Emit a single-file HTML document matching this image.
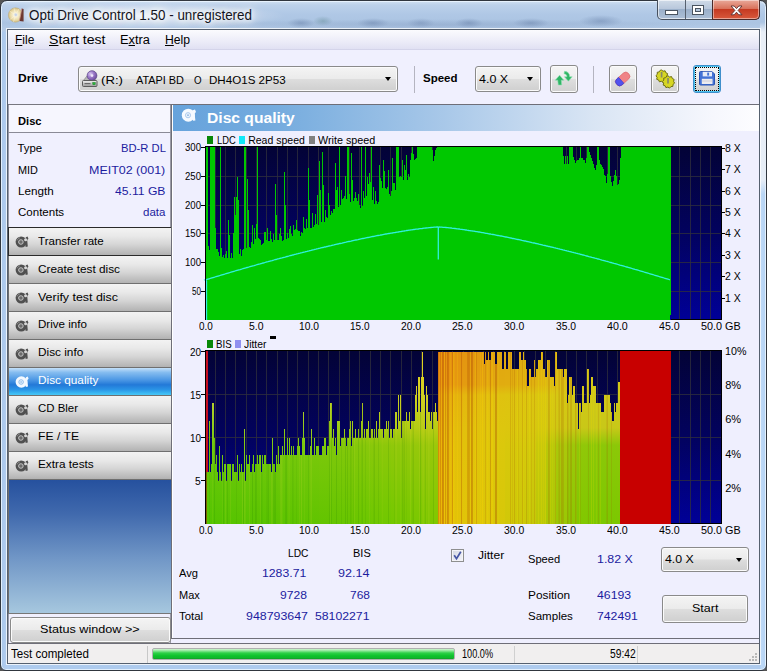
<!DOCTYPE html>
<html><head><meta charset="utf-8"><title>Opti Drive Control 1.50 - unregistered</title>
<style>
html,body{margin:0;padding:0}
body{width:767px;height:671px;overflow:hidden;position:relative;font-family:"Liberation Sans",sans-serif;font-size:12px;color:#000;background:#555}
div,span{position:absolute;box-sizing:border-box;white-space:nowrap}
#frame{left:0;top:0;width:767px;height:671px;border-radius:7px 7px 6px 6px;border:1px solid #30363e;box-shadow:inset 0 0 0 1px rgba(235,246,255,.85);background:
radial-gradient(ellipse 150px 13px at 135px 15px,rgba(255,255,255,.8),rgba(255,255,255,0) 100%),
radial-gradient(ellipse 14px 5px at 300px 22px,rgba(105,130,170,.5),rgba(105,130,170,0) 100%),
radial-gradient(ellipse 10px 5px at 322px 20px,rgba(100,140,150,.45),rgba(105,130,170,0) 100%),
radial-gradient(ellipse 16px 5px at 372px 22px,rgba(105,130,170,.5),rgba(105,130,170,0) 100%),
radial-gradient(ellipse 14px 5px at 420px 22px,rgba(105,130,170,.4),rgba(105,130,170,0) 100%),
radial-gradient(ellipse 14px 5px at 468px 22px,rgba(105,130,170,.5),rgba(105,130,170,0) 100%),
radial-gradient(ellipse 18px 5px at 530px 22px,rgba(105,130,170,.5),rgba(105,130,170,0) 100%),
radial-gradient(ellipse 22px 6px at 600px 20px,rgba(105,130,170,.5),rgba(105,130,170,0) 100%),
radial-gradient(ellipse 260px 6px at 440px 24px,rgba(120,145,185,.35),rgba(120,145,185,0) 100%),
linear-gradient(180deg,#d0e0f2 0,#bcd1ea 4px,#b0c8e6 13px,#abc4e2 22px,#b6cce7 30px,rgba(182,204,231,0) 31px),
linear-gradient(90deg,#a9c6ea 0,#b4cff0 7px,rgba(180,207,240,0) 8px,rgba(190,214,240,0) 759px,#bcd8f6 760px,#b4d2f4 767px),
linear-gradient(180deg,#c8daee 0,#b8d0ec 220px,#aecbee 100%)}
#title{left:29px;top:6px;font-size:14.5px;line-height:17px;color:#000;text-shadow:0 0 6px #fff,0 0 10px #fff,0 0 14px #fff}
#client{left:7px;top:29px;width:753px;height:635px;background:#efeffe;border:1px solid #55606f;box-shadow:0 0 0 1px rgba(255,255,255,.75)}
#menubar{left:8px;top:30px;width:751px;height:20px;background:linear-gradient(#fbfbfe 0,#ececf8 60%,#e1e1f3 100%);border-bottom:1px solid #d4d4ea}
.mi{top:33px;font-size:13.5px;line-height:15px}
u{text-decoration:underline;text-underline-offset:1px}
#tb{left:8px;top:50px;width:751px;height:55px;background:#f0f0fe;border-bottom:1px solid #77777f}
.b{font-weight:bold}
.combo{border:1px solid #8a8a8a;border-radius:3px;background:linear-gradient(#f4f4f4 0,#ebebeb 48%,#dddddd 52%,#cfcfcf 100%);box-shadow:inset 0 0 0 1px #fbfbfb}
.arrow{width:0;height:0;border-left:3.5px solid transparent;border-right:3.5px solid transparent;border-top:4px solid #000}
.tbtn{width:28px;height:28px;border:1px solid #8a8a8a;border-radius:3px;background:linear-gradient(#f5f5f5 0,#ececec 48%,#dedede 52%,#d0d0d0 100%);box-shadow:inset 0 0 0 1px #fbfbfb}
.sep{width:1px;background:#b4b4c0}
/* left panel */
#lp{left:8px;top:105px;width:163px;height:539px;background:#f0f0fe;border-left:1px solid #9a9aa6;border-right:1px solid #9a9aa6}
.lab{font-size:11.5px;line-height:14px;color:#000}
.val{font-size:11.5px;line-height:14px;color:#1a1aa6;text-align:right}
.nbtn{left:8px;width:164px;height:29px;border:1px solid #6f6f6f;background:linear-gradient(#f3f3f3 0,#e9e9e9 30%,#d6d6d6 60%,#b2b2b2 100%)}
.nbtn span{left:29px;top:6px;font-size:12px;line-height:14px;letter-spacing:.2px}
.nbtn.sel{background:linear-gradient(#c4e0f9 0,#86bdf0 16%,#4a96e4 45%,#2379d8 62%,#2a94e6 80%,#3ab8f2 93%,#48c6f6 100%)}
.nbtn.sel span{color:#fff}
.ico{left:8px;top:6px;width:15px;height:15px}
#blue{left:8px;top:480px;width:164px;height:134px;border-left:1px solid #6f6f6f;border-right:1px solid #6f6f6f;background:linear-gradient(#26519e 0,#4069ad 25%,#7096c6 58%,#a7c8df 100%)}
/* right */
#rp{left:171px;top:104px;width:588px;height:535px;background:#efeffe;border:1px solid #6e6e78;border-right:none;box-shadow:inset 1px 0 0 #fff}
#hdr{left:173px;top:105px;width:586px;height:26px;background:linear-gradient(90deg,#67a3dc 0,#74abde 100px,#a5c6e8 260px,#d9e5f4 420px,#f6f7fd 540px,#fdfdff 586px)}
#hdr span{left:34px;top:5px;font-size:15px;line-height:17px;color:#fff;letter-spacing:.2px}
.ax{font-size:11px;line-height:12px;color:#000}
.axr{text-align:right}
svg{position:absolute;left:0;top:0}
</style></head><body>
<div id="frame"></div>
<!-- title icon -->
<svg width="767" height="30" viewBox="0 0 767 30">
 <defs><radialGradient id="cd" cx="50%" cy="50%" r="50%"><stop offset="0" stop-color="#fff"/><stop offset=".3" stop-color="#f8f0d4"/><stop offset=".7" stop-color="#eadba8"/><stop offset="1" stop-color="#d2bd80"/></radialGradient></defs>
 <circle cx="15.500" cy="15" r="7.200" fill="url(#cd)" stroke="#b8a878" stroke-width=".5"/>
 <g stroke="#fff8e0" stroke-width=".7" opacity=".7"><path d="M15.500 15L9.500 11M15.500 15L10 19.500M15.500 15L14 8M15.500 15L13.500 22M15.500 15L19 9"/></g>
 <circle cx="15.800" cy="14.800" r="1.700" fill="#c9d3e6" stroke="#f4f0e0" stroke-width=".6"/>
 <path d="M21.800 8.500l1.800 .5v12.500l-4.200 -.6 .6 -3z" fill="#5a1c14" opacity=".9"/><path d="M21.800 8.500l-1.800 9.500 -.6 3" stroke="#c89088" stroke-width=".8" fill="none"/>
</svg>
<div style="left:29.00px;top:8.15px;font-size:14.00px;line-height:14.00px;transform:scaleX(0.9584);transform-origin:0 0;color:#14141c;text-shadow:0 0 5px #fff,0 0 9px #fff,0 0 13px #fff,0 0 17px #fff;">Opti Drive Control 1.50 - unregistered</div>

<!-- caption buttons -->
<div style="left:657px;top:0;width:103px;height:20px;border:1px solid #46505e;border-top:none;border-radius:0 0 5px 5px;background:linear-gradient(#d0dbe8 0,#b9c8dc 45%,#9bb0ca 50%,#adc0d7 100%);box-shadow:inset 0 0 0 1px rgba(255,255,255,.6)"></div>
<div style="left:712px;top:0;width:48px;height:20px;border:1px solid #4a2a2a;border-top:none;border-radius:0 0 5px 0;background:linear-gradient(#e9a99a 0,#d9725c 45%,#c53a22 50%,#d8593c 100%);box-shadow:inset 0 0 0 1px rgba(255,255,255,.45)"></div>
<div style="left:685px;top:0;width:1px;height:19px;background:#56606e"></div>
<svg width="767" height="30" viewBox="0 0 767 30">
 <rect x="665.5" y="10.5" width="12" height="4" fill="#fff" stroke="#4a5460" stroke-width="1"/>
 <rect x="692.5" y="5.5" width="11" height="9" fill="#fff" stroke="#4a5460"/><rect x="695.5" y="8.5" width="5" height="3" fill="#b5c7dc" stroke="#4a5460"/>
 <path d="M731 6l3.2 0 2.3 2.6 2.3-2.6 3.2 0-3.9 4.4 3.9 4.4-3.2 0-2.3-2.6-2.3 2.6-3.2 0 3.9-4.4z" fill="#fff" stroke="#5a3030" stroke-width=".9"/>
</svg>
<div style="left:760px;top:22px;width:6px;height:172px;background:linear-gradient(rgba(236,241,248,0) 0,#e9eff7 10px,#e6edf6 158px,rgba(230,237,246,0) 172px)"></div>
<div id="client"></div>
<div id="menubar"></div>
<div id="tb"></div>
<div style="left:15.20px;top:33.92px;font-size:12.50px;line-height:12.50px;transform:scaleX(0.9590);transform-origin:0 0;"><u>F</u>ile</div>
<div style="left:49.20px;top:33.92px;font-size:12.50px;line-height:12.50px;transform:scaleX(1.1300);transform-origin:0 0;"><u>S</u>tart test</div>
<div style="left:120.00px;top:33.92px;font-size:12.50px;line-height:12.50px;transform:scaleX(1.0256);transform-origin:0 0;">E<u>x</u>tra</div>
<div style="left:165.00px;top:33.92px;font-size:12.50px;line-height:12.50px;transform:scaleX(0.9732);transform-origin:0 0;"><u>H</u>elp</div>
<div style="left:17.50px;top:72.91px;font-size:11.80px;line-height:11.80px;transform:scaleX(1.0169);transform-origin:0 0;font-weight:bold;">Drive</div>
<div style="left:423.40px;top:72.71px;font-size:11.80px;line-height:11.80px;transform:scaleX(0.9746);transform-origin:0 0;font-weight:bold;">Speed</div>

<div class="combo" style="left:78px;top:66px;width:320px;height:26px"></div>
<div class="arrow" style="left:385px;top:77px"></div>
<div class="sep" style="left:414px;top:66px;height:27px"></div>
<div class="combo" style="left:475px;top:66px;width:66px;height:26px"></div>
<div class="arrow" style="left:527px;top:77px"></div>
<div class="tbtn" style="left:550px;top:65px"></div>
<div class="sep" style="left:593px;top:66px;height:27px"></div>
<div class="tbtn" style="left:609px;top:65px"></div>
<div class="tbtn" style="left:651px;top:65px"></div>
<div class="tbtn" style="left:693px;top:65px;border-color:#3f8fcb;box-shadow:inset 0 0 0 1px #4cc4f0"></div>
<div style="left:695px;top:67px;width:24px;height:24px;border:1px dotted #000"></div>
<svg width="767" height="110" viewBox="0 0 767 110">
 <defs><linearGradient id="drv" x1="0" y1="0" x2="0" y2="1"><stop offset="0" stop-color="#f2f2f2"/><stop offset="1" stop-color="#9a9a9a"/></linearGradient>
 <radialGradient id="pd" cx="35%" cy="35%" r="70%"><stop offset="0" stop-color="#d8c8f0"/><stop offset=".5" stop-color="#9a78c8"/><stop offset="1" stop-color="#6a4a9a"/></radialGradient></defs>
 <!-- drive icon -->
 <path d="M83 81l4-5h6l3 5z" fill="#b8b8b8" stroke="#777" stroke-width=".6"/>
 <circle cx="92" cy="75.600" r="4.900" fill="url(#pd)" stroke="#5a4488" stroke-width=".7"/><circle cx="92" cy="75.600" r="1.300" fill="#efe8fa"/>
 <rect x="82.500" y="80.500" width="14.500" height="6" rx="1" fill="url(#drv)" stroke="#5c5c5c"/>
 <rect x="84.500" y="83" width="6" height="1.200" fill="#6a6a6a"/>
 <rect x="92.800" y="82.500" width="2.400" height="2.200" fill="#28b838" stroke="#157a20" stroke-width=".5"/>
 <!-- refresh -->
 <path d="M559.600 75.200l4.200 5h-2.500l.4 4.800h-3.400l-.6-4.800h-2.500z" fill="#2fb565" stroke="#8fe0b0" stroke-width=".6"/>
 <path d="M564.500 71.300q4 .4 4.800 3.200l.4 2.300h2.500l-3.800 4.400-4-4.400h2.500l-.3-1.600q-.5-1.200-2.600-1.500z" fill="#2fb565" stroke="#8fe0b0" stroke-width=".6"/>
 <!-- eraser -->
 <g transform="rotate(-42 622.700 79)"><rect x="614.700" y="75" width="16" height="8" rx="3.600" fill="#f08486" stroke="#d86468" stroke-width=".6"/><path d="M618.300 75h2.400v8h-2.400a3.600 3.600 0 0 1-3.600-3.600v-.8a3.600 3.600 0 0 1 3.600-3.600z" fill="#5252ee" stroke="#3838c8" stroke-width=".6"/></g>
 <!-- gears -->
 <g fill="#d6d622" stroke="#6e6e12" stroke-width="1"><path d="M661.500 70l1.600 1.200 2-.4.700 1.900 1.800.9-.5 2 1 1.700-1.600 1.300-.1 2-2 .2-1.300 1.500-1.700-1-2 .5-.8-1.800-1.900-.7.400-2-1.200-1.600 1.400-1.400-.1-2 2-.4 1.100-1.700z"/><path d="M668 75.800l1.600 1.200 2-.4.700 1.900 1.800.9-.5 2 1 1.700-1.600 1.300-.1 2-2 .2-1.300 1.500-1.700-1-2 .5-.8-1.800-1.900-.7.400-2-1.200-1.600 1.400-1.400-.1-2 2-.4 1.100-1.700z"/></g>
 <rect x="660.800" y="72" width="1.600" height="5.500" fill="#86866a"/><rect x="667.200" y="78" width="1.600" height="5.500" fill="#86866a"/>
 <!-- floppy -->
 <path d="M699.500 72.500q0-1 1-1h11.500l2.500 2.500v10q0 1-1 1h-13q-1 0-1-1z" fill="#4373d6" stroke="#2c56b4"/>
 <rect x="702.700" y="71.800" width="9.300" height="4.600" fill="#e6ecf8"/><rect x="707.200" y="72.600" width="1.900" height="3" fill="#4373d6"/>
 <rect x="701.800" y="78.800" width="10.700" height="5.200" fill="#ececf0"/><rect x="701.800" y="80.600" width="10.700" height=".8" fill="#c8c8d0"/>
</svg>

<!-- LEFT PANEL -->
<div id="lp"></div>
<div style="left:8px;top:105px;width:163px;height:28px;background:#f6f6fe;border:1px solid #9a9aa6;border-top:none;border-bottom:1px solid #8a8a96"></div>
<div class="nbtn" style="top:227px;border-color:#2a2a2a"></div>
<div class="nbtn" style="top:255px"></div>
<div class="nbtn" style="top:283px"></div>
<div class="nbtn" style="top:311px"></div>
<div class="nbtn" style="top:339px"></div>
<div class="nbtn sel" style="top:367px"></div>
<div class="nbtn" style="top:395px"></div>
<div class="nbtn" style="top:423px"></div>
<div class="nbtn" style="top:451px"></div>
<div style="left:8px;top:255px;width:164px;height:1px;background:#2a2a2a"></div>
<div id="blue"></div>
<div style="left:8px;top:613px;width:164px;height:1px;background:#777"></div>
<div style="left:10px;top:617px;width:161px;height:26px;border:1px solid #8a8a8a;border-radius:3px;background:linear-gradient(#f4f4f4 0,#ebebeb 48%,#dddddd 52%,#cfcfcf 100%);box-shadow:inset 0 0 0 1px #fbfbfb"></div>

<!-- nav icons -->
<svg width="180" height="480" viewBox="0 0 180 480">
 <defs><g id="dsc"><circle cx="0" cy="0" r="5.600" fill="#505050"/><circle cx="-.3" cy="0" r="2.300" fill="#6c6c6c" stroke="#cdcdcd" stroke-width=".9"/><path d="M-4.200 -1.500a4.500 4.500 0 0 1 3 -2.800" stroke="#8a8a8a" stroke-width="1" fill="none"/><path d="M4.600 -4.800l1.800 -.6 .8 2.200 -1.200 1.200 .6 6.600 -2.200 .4 -.4 -6z" fill="#505050"/><circle cx="4.400" cy="-2.200" r="1.500" fill="#d8d8d8"/></g>
 <g id="dscw"><circle cx="0" cy="0" r="5.800" fill="#f4f9ff"/><circle cx="-.3" cy="0" r="2.300" fill="#e4f0fc" stroke="#7fb2e6" stroke-width=".8"/><circle cx="-.3" cy="0" r=".8" fill="#7fb2e6"/><path d="M4.600 -4.800l1.800 -.6 .8 2.200 -1.200 1.200 .6 6.600 -2.200 .4 -.4 -6z" fill="#f4f9ff"/></g></defs>
 <use href="#dsc" x="21.200" y="242"/><use href="#dsc" x="21.200" y="270"/><use href="#dsc" x="21.200" y="298"/><use href="#dsc" x="21.200" y="326"/><use href="#dsc" x="21.200" y="354"/>
 <use href="#dscw" x="21.400" y="382"/><use href="#dsc" x="21.200" y="410"/><use href="#dsc" x="21.200" y="438"/><use href="#dsc" x="21.200" y="466"/>
</svg>

<!-- RIGHT PANEL -->
<div id="rp"></div>
<div id="hdr"></div>
<svg width="767" height="671" viewBox="0 0 767 671">
 <defs><linearGradient id="nv" x1="0" y1="0" x2="0" y2="1"><stop offset="0" stop-color="#030336"/><stop offset=".5" stop-color="#02025e"/><stop offset="1" stop-color="#000098"/></linearGradient>
 <use href="#dscw" id="x"/></defs>
 <g transform="translate(188.300,115.200)"><circle r="6.500" fill="#f6faff"/><circle cx="-.3" r="2.600" fill="#e9f2fc" stroke="#9fc2e8" stroke-width=".8"/><circle cx="-.3" r=".9" fill="#8fb6e2"/><path d="M4.500 -5l2.200 -.6 1 2.400 -1.400 1.400 .8 7 -2.400 .4 -.6 -6.400z" fill="#f6faff"/></g>
 <!-- chart 1 -->
 <rect x="205" y="146" width="517" height="174" fill="url(#nv)"/>
 <g stroke="#2e2e3c" stroke-opacity=".8" stroke-width="1" shape-rendering="crispEdges"><path d="M215.5 146V320"/><path d="M225.5 146V320"/><path d="M235.5 146V320"/><path d="M246.5 146V320"/><path d="M256.5 146V320"/><path d="M266.5 146V320"/><path d="M277.5 146V320"/><path d="M287.5 146V320"/><path d="M297.5 146V320"/><path d="M308.5 146V320"/><path d="M318.5 146V320"/><path d="M328.5 146V320"/><path d="M339.5 146V320"/><path d="M349.5 146V320"/><path d="M359.5 146V320"/><path d="M370.5 146V320"/><path d="M380.5 146V320"/><path d="M390.5 146V320"/><path d="M401.5 146V320"/><path d="M411.5 146V320"/><path d="M421.5 146V320"/><path d="M432.5 146V320"/><path d="M442.5 146V320"/><path d="M452.5 146V320"/><path d="M463.5 146V320"/><path d="M473.5 146V320"/><path d="M483.5 146V320"/><path d="M493.5 146V320"/><path d="M504.5 146V320"/><path d="M514.5 146V320"/><path d="M524.5 146V320"/><path d="M535.5 146V320"/><path d="M545.5 146V320"/><path d="M555.5 146V320"/><path d="M566.5 146V320"/><path d="M576.5 146V320"/><path d="M586.5 146V320"/><path d="M597.5 146V320"/><path d="M607.5 146V320"/><path d="M617.5 146V320"/><path d="M628.5 146V320"/><path d="M638.5 146V320"/><path d="M648.5 146V320"/><path d="M659.5 146V320"/><path d="M669.5 146V320"/><path d="M679.5 146V320"/><path d="M690.5 146V320"/><path d="M700.5 146V320"/><path d="M710.5 146V320"/><path d="M205 176.5H721"/><path d="M205 205.5H721"/><path d="M205 233.5H721"/><path d="M205 262.5H721"/><path d="M205 291.5H721"/></g>
 <path d="M205 320 L206 147.0 L207 147.0 L207 147.0 L208 147.0 L208 245.7 L209 245.7 L209 250.0 L210 250.0 L210 147.0 L211 147.0 L211 147.0 L212 147.0 L212 147.0 L213 147.0 L213 147.0 L214 147.0 L214 147.0 L215 147.0 L215 228.0 L216 228.0 L216 249.4 L217 249.4 L217 249.3 L218 249.3 L218 252.1 L219 252.1 L219 256.2 L220 256.2 L220 147.0 L221 147.0 L221 247.6 L222 247.6 L222 256.6 L223 256.6 L223 254.9 L224 254.9 L224 257.8 L225 257.8 L225 253.9 L226 253.9 L226 251.1 L227 251.1 L227 257.8 L228 257.8 L228 220.0 L229 220.0 L229 235.0 L230 235.0 L230 258.2 L231 258.2 L231 252.6 L232 252.6 L232 258.4 L233 258.4 L233 233.0 L234 233.0 L234 197.0 L235 197.0 L235 215.0 L236 215.0 L236 197.0 L237 197.0 L237 177.0 L238 177.0 L238 200.0 L239 200.0 L239 254.0 L240 254.0 L240 249.4 L241 249.4 L241 256.3 L242 256.3 L242 250.0 L243 250.0 L243 249.2 L244 249.2 L244 147.0 L245 147.0 L245 147.0 L246 147.0 L246 247.6 L247 247.6 L247 179.0 L248 179.0 L248 210.0 L249 210.0 L249 246.9 L250 246.9 L250 247.7 L251 247.7 L251 242.2 L252 242.2 L252 225.2 L253 225.2 L253 243.7 L254 243.7 L254 228.0 L255 228.0 L255 238.7 L256 238.7 L256 223.9 L257 223.9 L257 147.0 L258 147.0 L258 237.5 L259 237.5 L259 239.2 L260 239.2 L260 240.4 L261 240.4 L261 244.6 L262 244.6 L262 244.1 L263 244.1 L263 243.1 L264 243.1 L264 232.2 L265 232.2 L265 232.4 L266 232.4 L266 240.4 L267 240.4 L267 228.0 L268 228.0 L268 240.7 L269 240.7 L269 240.6 L270 240.6 L270 231.0 L271 231.0 L271 238.9 L272 238.9 L272 241.7 L273 241.7 L273 234.3 L274 234.3 L274 239.9 L275 239.9 L275 184.0 L276 184.0 L276 215.0 L277 215.0 L277 239.6 L278 239.6 L278 240.1 L279 240.1 L279 233.6 L280 233.6 L280 228.0 L281 228.0 L281 235.5 L282 235.5 L282 240.6 L283 240.6 L283 239.7 L284 239.7 L284 172.0 L285 172.0 L285 205.0 L286 205.0 L286 238.6 L287 238.6 L287 233.1 L288 233.1 L288 237.8 L289 237.8 L289 229.0 L290 229.0 L290 225.8 L291 225.8 L291 233.9 L292 233.9 L292 236.3 L293 236.3 L293 224.6 L294 224.6 L294 229.8 L295 229.8 L295 229.0 L296 229.0 L296 220.0 L297 220.0 L297 230.0 L298 230.0 L298 230.9 L299 230.9 L299 230.6 L300 230.6 L300 236.0 L301 236.0 L301 232.2 L302 232.2 L302 233.0 L303 233.0 L303 216.7 L304 216.7 L304 227.6 L305 227.6 L305 228.6 L306 228.6 L306 219.0 L307 219.0 L307 227.5 L308 227.5 L308 168.0 L309 168.0 L309 200.0 L310 200.0 L310 227.5 L311 227.5 L311 228.1 L312 228.1 L312 212.6 L313 212.6 L313 227.4 L314 227.4 L314 225.4 L315 225.4 L315 213.7 L316 213.7 L316 223.5 L317 223.5 L317 195.0 L318 195.0 L318 224.7 L319 224.7 L319 161.0 L320 161.0 L320 190.0 L321 190.0 L321 221.7 L322 221.7 L322 152.0 L323 152.0 L323 185.0 L324 185.0 L324 221.7 L325 221.7 L325 209.6 L326 209.6 L326 217.3 L327 217.3 L327 217.8 L328 217.8 L328 193.0 L329 193.0 L329 204.8 L330 204.8 L330 215.0 L331 215.0 L331 211.4 L332 211.4 L332 212.5 L333 212.5 L333 209.4 L334 209.4 L334 208.6 L335 208.6 L335 163.0 L336 163.0 L336 190.0 L337 190.0 L337 187.1 L338 187.1 L338 206.9 L339 206.9 L339 147.0 L340 147.0 L340 204.9 L341 204.9 L341 190.2 L342 190.2 L342 199.0 L343 199.0 L343 198.0 L344 198.0 L344 195.5 L345 195.5 L345 176.0 L346 176.0 L346 198.8 L347 198.8 L347 147.0 L348 147.0 L348 147.0 L349 147.0 L349 193.6 L350 193.6 L350 201.8 L351 201.8 L351 153.0 L352 153.0 L352 180.0 L353 180.0 L353 200.7 L354 200.7 L354 197.5 L355 197.5 L355 192.1 L356 192.1 L356 198.0 L357 198.0 L357 201.0 L358 201.0 L358 193.5 L359 193.5 L359 205.3 L360 205.3 L360 208.3 L361 208.3 L361 147.0 L362 147.0 L362 205.8 L363 205.8 L363 191.0 L364 191.0 L364 197.8 L365 197.8 L365 147.0 L366 147.0 L366 195.5 L367 195.5 L367 177.2 L368 177.2 L368 183.6 L369 183.6 L369 173.0 L370 173.0 L370 181.9 L371 181.9 L371 147.0 L372 147.0 L372 200.0 L373 200.0 L373 187.3 L374 187.3 L374 203.6 L375 203.6 L375 191.4 L376 191.4 L376 200.8 L377 200.8 L377 203.9 L378 203.9 L378 201.7 L379 201.7 L379 165.0 L380 165.0 L380 178.0 L381 178.0 L381 180.8 L382 180.8 L382 188.1 L383 188.1 L383 160.0 L384 160.0 L384 171.0 L385 171.0 L385 187.8 L386 187.8 L386 189.3 L387 189.3 L387 187.1 L388 187.1 L388 170.0 L389 170.0 L389 194.0 L390 194.0 L390 195.9 L391 195.9 L391 191.0 L392 191.0 L392 158.0 L393 158.0 L393 183.3 L394 183.3 L394 182.5 L395 182.5 L395 189.9 L396 189.9 L396 147.0 L397 147.0 L397 147.0 L398 147.0 L398 147.0 L399 147.0 L399 176.9 L400 176.9 L400 176.0 L401 176.0 L401 177.4 L402 177.4 L402 160.0 L403 160.0 L403 179.6 L404 179.6 L404 165.0 L405 165.0 L405 169.5 L406 169.5 L406 155.0 L407 155.0 L407 179.8 L408 179.8 L408 173.6 L409 173.6 L409 177.3 L410 177.3 L410 159.9 L411 159.9 L411 153.2 L412 153.2 L412 147.0 L413 147.0 L413 153.6 L414 153.6 L414 159.9 L415 159.9 L415 159.4 L416 159.4 L416 158.0 L417 158.0 L417 147.0 L418 147.0 L418 147.0 L419 147.0 L419 147.0 L420 147.0 L420 147.0 L421 147.0 L421 147.0 L422 147.0 L422 147.0 L423 147.0 L423 147.0 L424 147.0 L424 147.0 L425 147.0 L425 147.0 L426 147.0 L426 147.0 L427 147.0 L427 147.0 L428 147.0 L428 147.0 L429 147.0 L429 147.0 L430 147.0 L430 147.0 L431 147.0 L431 147.0 L432 147.0 L432 150.0 L433 150.0 L433 161.0 L434 161.0 L434 155.5 L435 155.5 L435 150.0 L436 150.0 L436 148.0 L437 148.0 L437 147.0 L438 147.0 L438 147.0 L439 147.0 L439 147.0 L440 147.0 L440 147.0 L441 147.0 L441 147.0 L442 147.0 L442 147.0 L443 147.0 L443 147.0 L444 147.0 L444 147.0 L445 147.0 L445 147.0 L446 147.0 L446 147.0 L447 147.0 L447 147.0 L448 147.0 L448 147.0 L449 147.0 L449 147.0 L450 147.0 L450 147.0 L451 147.0 L451 147.0 L452 147.0 L452 147.0 L453 147.0 L453 147.0 L454 147.0 L454 147.0 L455 147.0 L455 147.0 L456 147.0 L456 147.0 L457 147.0 L457 147.0 L458 147.0 L458 147.0 L459 147.0 L459 147.0 L460 147.0 L460 147.0 L461 147.0 L461 147.0 L462 147.0 L462 147.0 L463 147.0 L463 147.0 L464 147.0 L464 147.0 L465 147.0 L465 147.0 L466 147.0 L466 147.0 L467 147.0 L467 147.0 L468 147.0 L468 147.0 L469 147.0 L469 147.0 L470 147.0 L470 147.0 L471 147.0 L471 147.0 L472 147.0 L472 147.0 L473 147.0 L473 147.0 L474 147.0 L474 147.0 L475 147.0 L475 147.0 L476 147.0 L476 147.0 L477 147.0 L477 147.0 L478 147.0 L478 147.0 L479 147.0 L479 147.0 L480 147.0 L480 147.0 L481 147.0 L481 147.0 L482 147.0 L482 147.0 L483 147.0 L483 147.0 L484 147.0 L484 147.0 L485 147.0 L485 147.0 L486 147.0 L486 147.0 L487 147.0 L487 147.0 L488 147.0 L488 147.0 L489 147.0 L489 147.0 L490 147.0 L490 147.0 L491 147.0 L491 147.0 L492 147.0 L492 147.0 L493 147.0 L493 147.0 L494 147.0 L494 147.0 L495 147.0 L495 147.0 L496 147.0 L496 147.0 L497 147.0 L497 147.0 L498 147.0 L498 147.0 L499 147.0 L499 147.0 L500 147.0 L500 147.0 L501 147.0 L501 147.0 L502 147.0 L502 147.0 L503 147.0 L503 147.0 L504 147.0 L504 147.0 L505 147.0 L505 147.0 L506 147.0 L506 147.0 L507 147.0 L507 147.0 L508 147.0 L508 147.0 L509 147.0 L509 147.0 L510 147.0 L510 147.0 L511 147.0 L511 147.0 L512 147.0 L512 147.0 L513 147.0 L513 147.0 L514 147.0 L514 147.0 L515 147.0 L515 147.0 L516 147.0 L516 147.0 L517 147.0 L517 147.0 L518 147.0 L518 147.0 L519 147.0 L519 147.0 L520 147.0 L520 147.0 L521 147.0 L521 147.0 L522 147.0 L522 147.0 L523 147.0 L523 147.0 L524 147.0 L524 147.0 L525 147.0 L525 147.0 L526 147.0 L526 147.0 L527 147.0 L527 147.0 L528 147.0 L528 147.0 L529 147.0 L529 147.0 L530 147.0 L530 147.0 L531 147.0 L531 147.0 L532 147.0 L532 147.0 L533 147.0 L533 147.0 L534 147.0 L534 147.0 L535 147.0 L535 147.0 L536 147.0 L536 147.0 L537 147.0 L537 147.0 L538 147.0 L538 147.0 L539 147.0 L539 147.0 L540 147.0 L540 147.0 L541 147.0 L541 147.0 L542 147.0 L542 147.0 L543 147.0 L543 147.0 L544 147.0 L544 147.0 L545 147.0 L545 147.0 L546 147.0 L546 147.0 L547 147.0 L547 147.0 L548 147.0 L548 147.0 L549 147.0 L549 147.0 L550 147.0 L550 147.0 L551 147.0 L551 147.0 L552 147.0 L552 147.0 L553 147.0 L553 147.0 L554 147.0 L554 147.0 L555 147.0 L555 147.0 L556 147.0 L556 147.0 L557 147.0 L557 147.0 L558 147.0 L558 147.0 L559 147.0 L559 147.0 L560 147.0 L560 147.0 L561 147.0 L561 147.0 L562 147.0 L562 147.0 L563 147.0 L563 156.0 L564 156.0 L564 164.0 L565 164.0 L565 156.0 L566 156.0 L566 164.0 L567 164.0 L567 156.0 L568 156.0 L568 164.0 L569 164.0 L569 147.0 L570 147.0 L570 147.0 L571 147.0 L571 147.0 L572 147.0 L572 147.0 L573 147.0 L573 157.0 L574 157.0 L574 160.3 L575 160.3 L575 163.2 L576 163.2 L576 161.3 L577 161.3 L577 160.0 L578 160.0 L578 160.3 L579 160.3 L579 157.7 L580 157.7 L580 147.0 L581 147.0 L581 158.1 L582 158.1 L582 158.1 L583 158.1 L583 159.6 L584 159.6 L584 159.7 L585 159.7 L585 163.2 L586 163.2 L586 158.1 L587 158.1 L587 147.0 L588 147.0 L588 147.0 L589 147.0 L589 152.3 L590 152.3 L590 155.3 L591 155.3 L591 158.0 L592 158.0 L592 161.4 L593 161.4 L593 164.2 L594 164.2 L594 167.9 L595 167.9 L595 169.6 L596 169.6 L596 165.3 L597 165.3 L597 147.0 L598 147.0 L598 147.0 L599 147.0 L599 159.5 L600 159.5 L600 164.0 L601 164.0 L601 165.3 L602 165.3 L602 167.4 L603 167.4 L603 168.9 L604 168.9 L604 175.1 L605 175.1 L605 176.1 L606 176.1 L606 182.7 L607 182.7 L607 173.7 L608 173.7 L608 147.0 L609 147.0 L609 147.0 L610 147.0 L610 175.7 L611 175.7 L611 181.9 L612 181.9 L612 185.7 L613 185.7 L613 180.8 L614 180.8 L614 175.1 L615 175.1 L615 169.9 L616 169.9 L616 176.3 L617 176.3 L617 184.6 L618 184.6 L618 184.4 L619 184.4 L619 179.5 L620 179.5 L620 158.2 L621 158.2 L621 147.0 L622 147.0 L622 147.0 L623 147.0 L623 147.0 L624 147.0 L624 147.0 L625 147.0 L625 147.0 L626 147.0 L626 147.0 L627 147.0 L627 147.0 L628 147.0 L628 147.0 L629 147.0 L629 147.0 L630 147.0 L630 147.0 L631 147.0 L631 147.0 L632 147.0 L632 147.0 L633 147.0 L633 147.0 L634 147.0 L634 147.0 L635 147.0 L635 147.0 L636 147.0 L636 147.0 L637 147.0 L637 147.0 L638 147.0 L638 147.0 L639 147.0 L639 147.0 L640 147.0 L640 147.0 L641 147.0 L641 147.0 L642 147.0 L642 147.0 L643 147.0 L643 147.0 L644 147.0 L644 147.0 L645 147.0 L645 147.0 L646 147.0 L646 147.0 L647 147.0 L647 147.0 L648 147.0 L648 147.0 L649 147.0 L649 147.0 L650 147.0 L650 147.0 L651 147.0 L651 147.0 L652 147.0 L652 147.0 L653 147.0 L653 147.0 L654 147.0 L654 147.0 L655 147.0 L655 147.0 L656 147.0 L656 147.0 L657 147.0 L657 147.0 L658 147.0 L658 147.0 L659 147.0 L659 147.0 L660 147.0 L660 147.0 L661 147.0 L661 147.0 L662 147.0 L662 147.0 L663 147.0 L663 147.0 L664 147.0 L664 147.0 L665 147.0 L665 147.0 L666 147.0 L666 147.0 L667 147.0 L667 147.0 L668 147.0 L668 147.0 L669 147.0 L669 147.0 L670 147.0 L670 147.0 L671 147.0 L670.5 320 Z" fill="#00c800" shape-rendering="crispEdges"/>
 <path d="M206.5 320 L206.5 281 L205 280.0 L206 279.7 L207 279.4 L208 279.1 L209 278.8 L210 278.5 L211 278.2 L212 277.9 L213 277.6 L214 277.3 L215 277.0 L216 276.7 L217 276.4 L218 276.1 L219 275.8 L220 275.5 L221 275.2 L222 274.9 L223 274.6 L224 274.3 L225 274.0 L226 273.7 L227 273.4 L228 273.1 L229 272.8 L230 272.5 L231 272.2 L232 271.9 L233 271.6 L234 271.3 L235 271.0 L236 270.7 L237 270.4 L238 270.1 L239 269.8 L240 269.6 L241 269.3 L242 269.0 L243 268.7 L244 268.4 L245 268.1 L246 267.8 L247 267.5 L248 267.3 L249 267.0 L250 266.7 L251 266.4 L252 266.1 L253 265.8 L254 265.6 L255 265.3 L256 265.0 L257 264.7 L258 264.4 L259 264.1 L260 263.9 L261 263.6 L262 263.3 L263 263.0 L264 262.8 L265 262.5 L266 262.2 L267 261.9 L268 261.7 L269 261.4 L270 261.1 L271 260.8 L272 260.6 L273 260.3 L274 260.0 L275 259.7 L276 259.5 L277 259.2 L278 258.9 L279 258.7 L280 258.4 L281 258.1 L282 257.9 L283 257.6 L284 257.3 L285 257.1 L286 256.8 L287 256.5 L288 256.3 L289 256.0 L290 255.7 L291 255.5 L292 255.2 L293 255.0 L294 254.7 L295 254.4 L296 254.2 L297 253.9 L298 253.7 L299 253.4 L300 253.2 L301 252.9 L302 252.7 L303 252.4 L304 252.1 L305 251.9 L306 251.6 L307 251.4 L308 251.1 L309 250.9 L310 250.6 L311 250.4 L312 250.1 L313 249.9 L314 249.7 L315 249.4 L316 249.2 L317 248.9 L318 248.7 L319 248.4 L320 248.2 L321 247.9 L322 247.7 L323 247.5 L324 247.2 L325 247.0 L326 246.8 L327 246.5 L328 246.3 L329 246.0 L330 245.8 L331 245.6 L332 245.3 L333 245.1 L334 244.9 L335 244.6 L336 244.4 L337 244.2 L338 244.0 L339 243.7 L340 243.5 L341 243.3 L342 243.1 L343 242.8 L344 242.6 L345 242.4 L346 242.2 L347 241.9 L348 241.7 L349 241.5 L350 241.3 L351 241.1 L352 240.8 L353 240.6 L354 240.4 L355 240.2 L356 240.0 L357 239.8 L358 239.6 L359 239.3 L360 239.1 L361 238.9 L362 238.7 L363 238.5 L364 238.3 L365 238.1 L366 237.9 L367 237.7 L368 237.5 L369 237.3 L370 237.1 L371 236.9 L372 236.7 L373 236.5 L374 236.3 L375 236.1 L376 235.9 L377 235.7 L378 235.5 L379 235.3 L380 235.2 L381 235.0 L382 234.8 L383 234.6 L384 234.4 L385 234.2 L386 234.0 L387 233.9 L388 233.7 L389 233.5 L390 233.3 L391 233.1 L392 233.0 L393 232.8 L394 232.6 L395 232.5 L396 232.3 L397 232.1 L398 232.0 L399 231.8 L400 231.6 L401 231.5 L402 231.3 L403 231.1 L404 231.0 L405 230.8 L406 230.7 L407 230.5 L408 230.4 L409 230.2 L410 230.1 L411 229.9 L412 229.8 L413 229.6 L414 229.5 L415 229.4 L416 229.2 L417 229.1 L418 229.0 L419 228.8 L420 228.7 L421 228.6 L422 228.5 L423 228.3 L424 228.2 L425 228.1 L426 228.0 L427 227.9 L428 227.8 L429 227.7 L430 227.6 L431 227.5 L432 227.4 L433 227.3 L434 227.2 L435 227.2 L436 227.1 L437 227.0 L438 227.0 M438.3 227 L438.3 259.5 M438.3 227 L439 227.0 L440 227.1 L441 227.1 L442 227.2 L443 227.3 L444 227.4 L445 227.4 L446 227.5 L447 227.6 L448 227.7 L449 227.8 L450 227.9 L451 228.0 L452 228.2 L453 228.3 L454 228.4 L455 228.5 L456 228.6 L457 228.8 L458 228.9 L459 229.0 L460 229.2 L461 229.3 L462 229.4 L463 229.6 L464 229.7 L465 229.9 L466 230.0 L467 230.2 L468 230.3 L469 230.5 L470 230.6 L471 230.8 L472 230.9 L473 231.1 L474 231.2 L475 231.4 L476 231.6 L477 231.7 L478 231.9 L479 232.0 L480 232.2 L481 232.4 L482 232.6 L483 232.7 L484 232.9 L485 233.1 L486 233.3 L487 233.4 L488 233.6 L489 233.8 L490 234.0 L491 234.2 L492 234.3 L493 234.5 L494 234.7 L495 234.9 L496 235.1 L497 235.3 L498 235.5 L499 235.7 L500 235.9 L501 236.0 L502 236.2 L503 236.4 L504 236.6 L505 236.8 L506 237.0 L507 237.2 L508 237.4 L509 237.6 L510 237.8 L511 238.0 L512 238.3 L513 238.5 L514 238.7 L515 238.9 L516 239.1 L517 239.3 L518 239.5 L519 239.7 L520 239.9 L521 240.1 L522 240.4 L523 240.6 L524 240.8 L525 241.0 L526 241.2 L527 241.5 L528 241.7 L529 241.9 L530 242.1 L531 242.3 L532 242.6 L533 242.8 L534 243.0 L535 243.2 L536 243.5 L537 243.7 L538 243.9 L539 244.2 L540 244.4 L541 244.6 L542 244.8 L543 245.1 L544 245.3 L545 245.5 L546 245.8 L547 246.0 L548 246.3 L549 246.5 L550 246.7 L551 247.0 L552 247.2 L553 247.4 L554 247.7 L555 247.9 L556 248.2 L557 248.4 L558 248.7 L559 248.9 L560 249.2 L561 249.4 L562 249.6 L563 249.9 L564 250.1 L565 250.4 L566 250.6 L567 250.9 L568 251.1 L569 251.4 L570 251.6 L571 251.9 L572 252.2 L573 252.4 L574 252.7 L575 252.9 L576 253.2 L577 253.4 L578 253.7 L579 253.9 L580 254.2 L581 254.5 L582 254.7 L583 255.0 L584 255.2 L585 255.5 L586 255.8 L587 256.0 L588 256.3 L589 256.6 L590 256.8 L591 257.1 L592 257.4 L593 257.6 L594 257.9 L595 258.2 L596 258.4 L597 258.7 L598 259.0 L599 259.2 L600 259.5 L601 259.8 L602 260.1 L603 260.3 L604 260.6 L605 260.9 L606 261.2 L607 261.4 L608 261.7 L609 262.0 L610 262.3 L611 262.5 L612 262.8 L613 263.1 L614 263.4 L615 263.6 L616 263.9 L617 264.2 L618 264.5 L619 264.8 L620 265.1 L621 265.3 L622 265.6 L623 265.9 L624 266.2 L625 266.5 L626 266.8 L627 267.0 L628 267.3 L629 267.6 L630 267.9 L631 268.2 L632 268.5 L633 268.8 L634 269.1 L635 269.4 L636 269.6 L637 269.9 L638 270.2 L639 270.5 L640 270.8 L641 271.1 L642 271.4 L643 271.7 L644 272.0 L645 272.3 L646 272.6 L647 272.9 L648 273.2 L649 273.5 L650 273.8 L651 274.1 L652 274.4 L653 274.7 L654 275.0 L655 275.3 L656 275.6 L657 275.9 L658 276.2 L659 276.5 L660 276.8 L661 277.1 L662 277.4 L663 277.7 L664 278.0 L665 278.3 L666 278.6 L667 278.9 L668 279.2 L669 279.5 L670 279.8 " fill="none" stroke="#30f0e0" stroke-width="1.300"/>
 <path d="M205.500 320V146.500H721.500V320M671 319.500H722" fill="none" stroke="#000" shape-rendering="crispEdges"/>
 <!-- chart 2 -->
 <rect x="205" y="350" width="517" height="174" fill="url(#nv)"/>
 <g stroke="#2e2e3c" stroke-opacity=".8" stroke-width="1" shape-rendering="crispEdges"><path d="M215.5 350V524"/><path d="M225.5 350V524"/><path d="M235.5 350V524"/><path d="M246.5 350V524"/><path d="M256.5 350V524"/><path d="M266.5 350V524"/><path d="M277.5 350V524"/><path d="M287.5 350V524"/><path d="M297.5 350V524"/><path d="M308.5 350V524"/><path d="M318.5 350V524"/><path d="M328.5 350V524"/><path d="M339.5 350V524"/><path d="M349.5 350V524"/><path d="M359.5 350V524"/><path d="M370.5 350V524"/><path d="M380.5 350V524"/><path d="M390.5 350V524"/><path d="M401.5 350V524"/><path d="M411.5 350V524"/><path d="M421.5 350V524"/><path d="M432.5 350V524"/><path d="M442.5 350V524"/><path d="M452.5 350V524"/><path d="M463.5 350V524"/><path d="M473.5 350V524"/><path d="M483.5 350V524"/><path d="M493.5 350V524"/><path d="M504.5 350V524"/><path d="M514.5 350V524"/><path d="M524.5 350V524"/><path d="M535.5 350V524"/><path d="M545.5 350V524"/><path d="M555.5 350V524"/><path d="M566.5 350V524"/><path d="M576.5 350V524"/><path d="M586.5 350V524"/><path d="M597.5 350V524"/><path d="M607.5 350V524"/><path d="M617.5 350V524"/><path d="M628.5 350V524"/><path d="M638.5 350V524"/><path d="M648.5 350V524"/><path d="M659.5 350V524"/><path d="M669.5 350V524"/><path d="M679.5 350V524"/><path d="M690.5 350V524"/><path d="M700.5 350V524"/><path d="M710.5 350V524"/><path d="M205 394.5H721"/><path d="M205 437.5H721"/><path d="M205 480.5H721"/></g>
 <g shape-rendering="crispEdges"><defs><linearGradient id="z0" gradientUnits="userSpaceOnUse" x1="0" y1="350" x2="0" y2="523"><stop offset="0.00" stop-color="rgb(216,216,64)"/><stop offset="0.20" stop-color="rgb(200,212,55)"/><stop offset="0.26" stop-color="rgb(190,210,49)"/><stop offset="0.45" stop-color="rgb(140,204,24)"/><stop offset="0.55" stop-color="rgb(110,200,12)"/><stop offset="1.00" stop-color="rgb(84,196,0)"/></linearGradient><linearGradient id="z1" gradientUnits="userSpaceOnUse" x1="0" y1="350" x2="0" y2="523"><stop offset="0.00" stop-color="rgb(217,216,64)"/><stop offset="0.20" stop-color="rgb(200,212,55)"/><stop offset="0.26" stop-color="rgb(190,210,49)"/><stop offset="0.45" stop-color="rgb(141,204,24)"/><stop offset="0.55" stop-color="rgb(111,200,12)"/><stop offset="1.00" stop-color="rgb(85,196,0)"/></linearGradient><linearGradient id="z2" gradientUnits="userSpaceOnUse" x1="0" y1="350" x2="0" y2="523"><stop offset="0.00" stop-color="rgb(218,216,64)"/><stop offset="0.20" stop-color="rgb(201,212,54)"/><stop offset="0.26" stop-color="rgb(191,210,48)"/><stop offset="0.45" stop-color="rgb(142,204,24)"/><stop offset="0.55" stop-color="rgb(113,200,12)"/><stop offset="1.00" stop-color="rgb(87,196,0)"/></linearGradient><linearGradient id="z3" gradientUnits="userSpaceOnUse" x1="0" y1="350" x2="0" y2="523"><stop offset="0.00" stop-color="rgb(218,216,64)"/><stop offset="0.20" stop-color="rgb(202,212,54)"/><stop offset="0.26" stop-color="rgb(192,210,48)"/><stop offset="0.45" stop-color="rgb(143,204,24)"/><stop offset="0.55" stop-color="rgb(114,200,12)"/><stop offset="1.00" stop-color="rgb(88,196,0)"/></linearGradient><linearGradient id="z4" gradientUnits="userSpaceOnUse" x1="0" y1="350" x2="0" y2="523"><stop offset="0.00" stop-color="rgb(219,216,64)"/><stop offset="0.20" stop-color="rgb(202,212,54)"/><stop offset="0.26" stop-color="rgb(192,210,48)"/><stop offset="0.45" stop-color="rgb(144,204,24)"/><stop offset="0.55" stop-color="rgb(115,200,12)"/><stop offset="1.00" stop-color="rgb(89,196,0)"/></linearGradient><linearGradient id="z5" gradientUnits="userSpaceOnUse" x1="0" y1="350" x2="0" y2="523"><stop offset="0.00" stop-color="rgb(220,216,64)"/><stop offset="0.20" stop-color="rgb(203,212,53)"/><stop offset="0.26" stop-color="rgb(193,210,47)"/><stop offset="0.45" stop-color="rgb(145,204,24)"/><stop offset="0.55" stop-color="rgb(116,200,12)"/><stop offset="1.00" stop-color="rgb(90,196,0)"/></linearGradient><linearGradient id="z6" gradientUnits="userSpaceOnUse" x1="0" y1="350" x2="0" y2="523"><stop offset="0.00" stop-color="rgb(221,216,64)"/><stop offset="0.20" stop-color="rgb(203,212,53)"/><stop offset="0.26" stop-color="rgb(193,210,47)"/><stop offset="0.45" stop-color="rgb(146,204,24)"/><stop offset="0.55" stop-color="rgb(117,200,12)"/><stop offset="1.00" stop-color="rgb(91,196,0)"/></linearGradient><linearGradient id="z7" gradientUnits="userSpaceOnUse" x1="0" y1="350" x2="0" y2="523"><stop offset="0.00" stop-color="rgb(222,216,64)"/><stop offset="0.20" stop-color="rgb(204,212,52)"/><stop offset="0.26" stop-color="rgb(194,210,46)"/><stop offset="0.45" stop-color="rgb(147,204,24)"/><stop offset="0.55" stop-color="rgb(119,200,12)"/><stop offset="1.00" stop-color="rgb(93,196,0)"/></linearGradient><linearGradient id="z8" gradientUnits="userSpaceOnUse" x1="0" y1="350" x2="0" y2="523"><stop offset="0.00" stop-color="rgb(222,216,64)"/><stop offset="0.20" stop-color="rgb(205,212,52)"/><stop offset="0.26" stop-color="rgb(195,210,46)"/><stop offset="0.45" stop-color="rgb(148,204,24)"/><stop offset="0.55" stop-color="rgb(120,200,12)"/><stop offset="1.00" stop-color="rgb(94,196,0)"/></linearGradient><linearGradient id="z9" gradientUnits="userSpaceOnUse" x1="0" y1="350" x2="0" y2="523"><stop offset="0.00" stop-color="rgb(223,216,64)"/><stop offset="0.20" stop-color="rgb(205,212,52)"/><stop offset="0.26" stop-color="rgb(195,210,46)"/><stop offset="0.45" stop-color="rgb(149,204,24)"/><stop offset="0.55" stop-color="rgb(121,200,12)"/><stop offset="1.00" stop-color="rgb(95,196,0)"/></linearGradient><linearGradient id="z10" gradientUnits="userSpaceOnUse" x1="0" y1="350" x2="0" y2="523"><stop offset="0.00" stop-color="rgb(224,215,61)"/><stop offset="0.20" stop-color="rgb(206,211,50)"/><stop offset="0.26" stop-color="rgb(196,209,44)"/><stop offset="0.45" stop-color="rgb(151,204,23)"/><stop offset="0.55" stop-color="rgb(123,200,11)"/><stop offset="1.00" stop-color="rgb(97,196,0)"/></linearGradient><linearGradient id="z11" gradientUnits="userSpaceOnUse" x1="0" y1="350" x2="0" y2="523"><stop offset="0.00" stop-color="rgb(224,214,56)"/><stop offset="0.20" stop-color="rgb(207,211,47)"/><stop offset="0.26" stop-color="rgb(197,209,42)"/><stop offset="0.45" stop-color="rgb(154,204,23)"/><stop offset="0.55" stop-color="rgb(125,200,11)"/><stop offset="1.00" stop-color="rgb(99,196,0)"/></linearGradient><linearGradient id="z12" gradientUnits="userSpaceOnUse" x1="0" y1="350" x2="0" y2="523"><stop offset="0.00" stop-color="rgb(224,213,52)"/><stop offset="0.20" stop-color="rgb(208,210,44)"/><stop offset="0.26" stop-color="rgb(198,209,40)"/><stop offset="0.45" stop-color="rgb(157,204,22)"/><stop offset="0.55" stop-color="rgb(128,200,11)"/><stop offset="1.00" stop-color="rgb(101,197,0)"/></linearGradient><linearGradient id="z13" gradientUnits="userSpaceOnUse" x1="0" y1="350" x2="0" y2="523"><stop offset="0.00" stop-color="rgb(224,211,47)"/><stop offset="0.20" stop-color="rgb(209,209,41)"/><stop offset="0.26" stop-color="rgb(200,208,38)"/><stop offset="0.45" stop-color="rgb(161,204,21)"/><stop offset="0.55" stop-color="rgb(131,200,10)"/><stop offset="1.00" stop-color="rgb(104,198,0)"/></linearGradient><linearGradient id="z14" gradientUnits="userSpaceOnUse" x1="0" y1="350" x2="0" y2="523"><stop offset="0.00" stop-color="rgb(224,210,43)"/><stop offset="0.20" stop-color="rgb(209,209,38)"/><stop offset="0.26" stop-color="rgb(201,208,36)"/><stop offset="0.45" stop-color="rgb(164,204,21)"/><stop offset="0.55" stop-color="rgb(133,200,10)"/><stop offset="1.00" stop-color="rgb(106,198,0)"/></linearGradient><linearGradient id="z15" gradientUnits="userSpaceOnUse" x1="0" y1="350" x2="0" y2="523"><stop offset="0.00" stop-color="rgb(224,209,38)"/><stop offset="0.20" stop-color="rgb(210,208,36)"/><stop offset="0.26" stop-color="rgb(202,208,34)"/><stop offset="0.45" stop-color="rgb(167,204,20)"/><stop offset="0.55" stop-color="rgb(136,200,10)"/><stop offset="1.00" stop-color="rgb(108,199,0)"/></linearGradient><linearGradient id="z16" gradientUnits="userSpaceOnUse" x1="0" y1="350" x2="0" y2="523"><stop offset="0.00" stop-color="rgb(224,208,33)"/><stop offset="0.20" stop-color="rgb(211,208,33)"/><stop offset="0.26" stop-color="rgb(203,208,32)"/><stop offset="0.45" stop-color="rgb(170,204,20)"/><stop offset="0.55" stop-color="rgb(138,200,10)"/><stop offset="1.00" stop-color="rgb(111,199,0)"/></linearGradient><linearGradient id="z17" gradientUnits="userSpaceOnUse" x1="0" y1="350" x2="0" y2="523"><stop offset="0.00" stop-color="rgb(224,208,32)"/><stop offset="0.20" stop-color="rgb(212,208,32)"/><stop offset="0.26" stop-color="rgb(204,208,32)"/><stop offset="0.45" stop-color="rgb(173,204,20)"/><stop offset="0.55" stop-color="rgb(141,200,10)"/><stop offset="1.00" stop-color="rgb(113,200,0)"/></linearGradient><linearGradient id="z18" gradientUnits="userSpaceOnUse" x1="0" y1="350" x2="0" y2="523"><stop offset="0.00" stop-color="rgb(225,208,32)"/><stop offset="0.20" stop-color="rgb(213,208,32)"/><stop offset="0.26" stop-color="rgb(205,208,32)"/><stop offset="0.45" stop-color="rgb(175,204,20)"/><stop offset="0.55" stop-color="rgb(144,200,10)"/><stop offset="1.00" stop-color="rgb(116,200,0)"/></linearGradient><linearGradient id="z19" gradientUnits="userSpaceOnUse" x1="0" y1="350" x2="0" y2="523"><stop offset="0.00" stop-color="rgb(225,208,32)"/><stop offset="0.20" stop-color="rgb(214,208,32)"/><stop offset="0.26" stop-color="rgb(206,208,32)"/><stop offset="0.45" stop-color="rgb(178,204,20)"/><stop offset="0.55" stop-color="rgb(147,200,10)"/><stop offset="1.00" stop-color="rgb(119,200,0)"/></linearGradient><linearGradient id="z20" gradientUnits="userSpaceOnUse" x1="0" y1="350" x2="0" y2="523"><stop offset="0.00" stop-color="rgb(226,208,32)"/><stop offset="0.20" stop-color="rgb(215,208,32)"/><stop offset="0.26" stop-color="rgb(207,208,32)"/><stop offset="0.45" stop-color="rgb(181,204,20)"/><stop offset="0.55" stop-color="rgb(150,200,10)"/><stop offset="1.00" stop-color="rgb(122,200,0)"/></linearGradient><linearGradient id="z21" gradientUnits="userSpaceOnUse" x1="0" y1="350" x2="0" y2="523"><stop offset="0.00" stop-color="rgb(227,208,32)"/><stop offset="0.20" stop-color="rgb(216,208,32)"/><stop offset="0.26" stop-color="rgb(208,208,32)"/><stop offset="0.45" stop-color="rgb(183,204,20)"/><stop offset="0.55" stop-color="rgb(153,200,10)"/><stop offset="1.00" stop-color="rgb(125,200,0)"/></linearGradient><linearGradient id="z22" gradientUnits="userSpaceOnUse" x1="0" y1="350" x2="0" y2="523"><stop offset="0.00" stop-color="rgb(228,208,32)"/><stop offset="0.20" stop-color="rgb(218,208,32)"/><stop offset="0.26" stop-color="rgb(210,208,32)"/><stop offset="0.45" stop-color="rgb(186,204,20)"/><stop offset="0.55" stop-color="rgb(156,200,10)"/><stop offset="1.00" stop-color="rgb(128,200,0)"/></linearGradient><linearGradient id="z220" gradientUnits="userSpaceOnUse" x1="0" y1="350" x2="0" y2="523"><stop offset="0.00" stop-color="rgb(231,140,16)"/><stop offset="0.20" stop-color="rgb(231,146,16)"/><stop offset="0.26" stop-color="rgb(231,160,14)"/><stop offset="0.45" stop-color="rgb(231,170,12)"/><stop offset="0.55" stop-color="rgb(231,174,10)"/><stop offset="1.00" stop-color="rgb(231,180,8)"/></linearGradient><linearGradient id="z23" gradientUnits="userSpaceOnUse" x1="0" y1="350" x2="0" y2="523"><stop offset="0.00" stop-color="rgb(230,144,16)"/><stop offset="0.20" stop-color="rgb(230,150,16)"/><stop offset="0.26" stop-color="rgb(230,171,14)"/><stop offset="0.45" stop-color="rgb(229,181,12)"/><stop offset="0.55" stop-color="rgb(229,185,10)"/><stop offset="1.00" stop-color="rgb(229,189,8)"/></linearGradient><linearGradient id="z24" gradientUnits="userSpaceOnUse" x1="0" y1="350" x2="0" y2="523"><stop offset="0.00" stop-color="rgb(229,147,16)"/><stop offset="0.20" stop-color="rgb(229,153,16)"/><stop offset="0.26" stop-color="rgb(229,178,14)"/><stop offset="0.45" stop-color="rgb(227,188,12)"/><stop offset="0.55" stop-color="rgb(227,191,10)"/><stop offset="1.00" stop-color="rgb(226,195,8)"/></linearGradient><linearGradient id="z25" gradientUnits="userSpaceOnUse" x1="0" y1="350" x2="0" y2="523"><stop offset="0.00" stop-color="rgb(228,149,16)"/><stop offset="0.20" stop-color="rgb(228,156,16)"/><stop offset="0.26" stop-color="rgb(228,183,14)"/><stop offset="0.45" stop-color="rgb(226,192,12)"/><stop offset="0.55" stop-color="rgb(226,194,10)"/><stop offset="1.00" stop-color="rgb(225,197,8)"/></linearGradient><linearGradient id="z26" gradientUnits="userSpaceOnUse" x1="0" y1="350" x2="0" y2="523"><stop offset="0.00" stop-color="rgb(227,153,16)"/><stop offset="0.20" stop-color="rgb(227,161,16)"/><stop offset="0.26" stop-color="rgb(227,187,14)"/><stop offset="0.45" stop-color="rgb(225,194,12)"/><stop offset="0.55" stop-color="rgb(224,196,10)"/><stop offset="1.00" stop-color="rgb(222,198,8)"/></linearGradient><linearGradient id="z27" gradientUnits="userSpaceOnUse" x1="0" y1="350" x2="0" y2="523"><stop offset="0.00" stop-color="rgb(226,159,16)"/><stop offset="0.20" stop-color="rgb(226,166,16)"/><stop offset="0.26" stop-color="rgb(225,190,15)"/><stop offset="0.45" stop-color="rgb(223,196,13)"/><stop offset="0.55" stop-color="rgb(222,198,11)"/><stop offset="1.00" stop-color="rgb(219,199,8)"/></linearGradient><linearGradient id="z28" gradientUnits="userSpaceOnUse" x1="0" y1="350" x2="0" y2="523"><stop offset="0.00" stop-color="rgb(225,166,16)"/><stop offset="0.20" stop-color="rgb(225,172,16)"/><stop offset="0.26" stop-color="rgb(223,194,16)"/><stop offset="0.45" stop-color="rgb(221,198,14)"/><stop offset="0.55" stop-color="rgb(219,200,12)"/><stop offset="1.00" stop-color="rgb(215,200,8)"/></linearGradient><linearGradient id="z29" gradientUnits="userSpaceOnUse" x1="0" y1="350" x2="0" y2="523"><stop offset="0.00" stop-color="rgb(225,167,16)"/><stop offset="0.20" stop-color="rgb(225,173,16)"/><stop offset="0.26" stop-color="rgb(222,195,16)"/><stop offset="0.45" stop-color="rgb(220,198,14)"/><stop offset="0.55" stop-color="rgb(216,200,12)"/><stop offset="1.00" stop-color="rgb(209,200,8)"/></linearGradient><linearGradient id="z30" gradientUnits="userSpaceOnUse" x1="0" y1="350" x2="0" y2="523"><stop offset="0.00" stop-color="rgb(224,169,16)"/><stop offset="0.20" stop-color="rgb(224,175,16)"/><stop offset="0.26" stop-color="rgb(221,196,16)"/><stop offset="0.45" stop-color="rgb(218,199,14)"/><stop offset="0.55" stop-color="rgb(214,200,12)"/><stop offset="1.00" stop-color="rgb(204,200,8)"/></linearGradient><linearGradient id="z31" gradientUnits="userSpaceOnUse" x1="0" y1="350" x2="0" y2="523"><stop offset="0.00" stop-color="rgb(224,171,16)"/><stop offset="0.20" stop-color="rgb(224,177,16)"/><stop offset="0.26" stop-color="rgb(220,197,16)"/><stop offset="0.45" stop-color="rgb(216,199,14)"/><stop offset="0.55" stop-color="rgb(211,200,12)"/><stop offset="1.00" stop-color="rgb(198,200,8)"/></linearGradient><linearGradient id="z32" gradientUnits="userSpaceOnUse" x1="0" y1="350" x2="0" y2="523"><stop offset="0.00" stop-color="rgb(223,175,16)"/><stop offset="0.20" stop-color="rgb(223,181,16)"/><stop offset="0.26" stop-color="rgb(218,198,16)"/><stop offset="0.45" stop-color="rgb(213,200,15)"/><stop offset="0.55" stop-color="rgb(201,200,11)"/><stop offset="1.00" stop-color="rgb(186,200,7)"/></linearGradient><linearGradient id="z33" gradientUnits="userSpaceOnUse" x1="0" y1="350" x2="0" y2="523"><stop offset="0.00" stop-color="rgb(222,181,18)"/><stop offset="0.20" stop-color="rgb(221,186,18)"/><stop offset="0.26" stop-color="rgb(216,199,18)"/><stop offset="0.45" stop-color="rgb(210,200,17)"/><stop offset="0.55" stop-color="rgb(186,200,10)"/><stop offset="1.00" stop-color="rgb(170,200,5)"/></linearGradient><linearGradient id="z34" gradientUnits="userSpaceOnUse" x1="0" y1="350" x2="0" y2="523"><stop offset="0.00" stop-color="rgb(222,188,19)"/><stop offset="0.20" stop-color="rgb(220,192,19)"/><stop offset="0.26" stop-color="rgb(214,199,19)"/><stop offset="0.45" stop-color="rgb(207,200,19)"/><stop offset="0.55" stop-color="rgb(172,200,10)"/><stop offset="1.00" stop-color="rgb(154,200,4)"/></linearGradient><linearGradient id="z35" gradientUnits="userSpaceOnUse" x1="0" y1="350" x2="0" y2="523"><stop offset="0.00" stop-color="rgb(219,193,21)"/><stop offset="0.20" stop-color="rgb(217,196,21)"/><stop offset="0.26" stop-color="rgb(211,200,21)"/><stop offset="0.45" stop-color="rgb(203,200,21)"/><stop offset="0.55" stop-color="rgb(158,200,9)"/><stop offset="1.00" stop-color="rgb(140,200,2)"/></linearGradient><linearGradient id="z36" gradientUnits="userSpaceOnUse" x1="0" y1="350" x2="0" y2="523"><stop offset="0.00" stop-color="rgb(217,197,23)"/><stop offset="0.20" stop-color="rgb(213,198,23)"/><stop offset="0.26" stop-color="rgb(209,200,23)"/><stop offset="0.45" stop-color="rgb(201,200,23)"/><stop offset="0.55" stop-color="rgb(145,200,8)"/><stop offset="1.00" stop-color="rgb(129,200,0)"/></linearGradient><linearGradient id="z37" gradientUnits="userSpaceOnUse" x1="0" y1="350" x2="0" y2="523"><stop offset="0.00" stop-color="rgb(216,200,24)"/><stop offset="0.20" stop-color="rgb(212,200,24)"/><stop offset="0.26" stop-color="rgb(208,200,24)"/><stop offset="0.45" stop-color="rgb(200,200,24)"/><stop offset="0.55" stop-color="rgb(140,200,8)"/><stop offset="1.00" stop-color="rgb(124,200,0)"/></linearGradient><linearGradient id="z38" gradientUnits="userSpaceOnUse" x1="0" y1="350" x2="0" y2="523"><stop offset="0.00" stop-color="rgb(216,200,24)"/><stop offset="0.20" stop-color="rgb(212,200,24)"/><stop offset="0.26" stop-color="rgb(208,200,24)"/><stop offset="0.45" stop-color="rgb(200,200,24)"/><stop offset="0.55" stop-color="rgb(140,200,8)"/><stop offset="1.00" stop-color="rgb(124,200,0)"/></linearGradient><linearGradient id="z39" gradientUnits="userSpaceOnUse" x1="0" y1="350" x2="0" y2="523"><stop offset="0.00" stop-color="rgb(216,200,24)"/><stop offset="0.20" stop-color="rgb(212,200,24)"/><stop offset="0.26" stop-color="rgb(208,200,24)"/><stop offset="0.45" stop-color="rgb(200,200,24)"/><stop offset="0.55" stop-color="rgb(140,200,8)"/><stop offset="1.00" stop-color="rgb(124,200,0)"/></linearGradient><linearGradient id="z40" gradientUnits="userSpaceOnUse" x1="0" y1="350" x2="0" y2="523"><stop offset="0.00" stop-color="rgb(216,200,24)"/><stop offset="0.20" stop-color="rgb(212,200,24)"/><stop offset="0.26" stop-color="rgb(208,200,24)"/><stop offset="0.45" stop-color="rgb(200,200,24)"/><stop offset="0.55" stop-color="rgb(140,200,8)"/><stop offset="1.00" stop-color="rgb(124,200,0)"/></linearGradient></defs><rect x="207" y="472.2" width="1" height="51.8" fill="url(#z0)"/><rect x="208" y="472.2" width="1" height="51.8" fill="url(#z0)"/><rect x="209" y="420.5" width="1" height="103.5" fill="url(#z0)"/><rect x="210" y="472.2" width="1" height="51.8" fill="url(#z0)"/><rect x="211" y="463.6" width="1" height="60.4" fill="url(#z0)"/><rect x="212" y="403.2" width="1" height="120.8" fill="url(#z0)"/><rect x="213" y="403.2" width="1" height="120.8" fill="url(#z0)"/><rect x="214" y="437.8" width="1" height="86.2" fill="url(#z0)"/><rect x="215" y="463.6" width="1" height="60.4" fill="url(#z0)"/><rect x="216" y="455.0" width="1" height="69.0" fill="url(#z1)"/><rect x="217" y="472.2" width="1" height="51.8" fill="url(#z1)"/><rect x="218" y="480.9" width="1" height="43.1" fill="url(#z1)"/><rect x="219" y="446.4" width="1" height="77.6" fill="url(#z1)"/><rect x="220" y="472.2" width="1" height="51.8" fill="url(#z1)"/><rect x="221" y="480.9" width="1" height="43.1" fill="url(#z1)"/><rect x="222" y="455.0" width="1" height="69.0" fill="url(#z1)"/><rect x="223" y="472.2" width="1" height="51.8" fill="url(#z1)"/><rect x="224" y="463.6" width="1" height="60.4" fill="url(#z1)"/><rect x="225" y="463.6" width="1" height="60.4" fill="url(#z1)"/><rect x="226" y="480.9" width="1" height="43.1" fill="url(#z2)"/><rect x="227" y="463.6" width="1" height="60.4" fill="url(#z2)"/><rect x="228" y="463.6" width="1" height="60.4" fill="url(#z2)"/><rect x="229" y="463.6" width="1" height="60.4" fill="url(#z2)"/><rect x="230" y="463.6" width="1" height="60.4" fill="url(#z2)"/><rect x="231" y="480.9" width="1" height="43.1" fill="url(#z2)"/><rect x="232" y="463.6" width="1" height="60.4" fill="url(#z2)"/><rect x="233" y="463.6" width="1" height="60.4" fill="url(#z2)"/><rect x="234" y="472.2" width="1" height="51.8" fill="url(#z2)"/><rect x="235" y="472.2" width="1" height="51.8" fill="url(#z2)"/><rect x="236" y="472.2" width="1" height="51.8" fill="url(#z3)"/><rect x="237" y="455.0" width="1" height="69.0" fill="url(#z3)"/><rect x="238" y="480.9" width="1" height="43.1" fill="url(#z3)"/><rect x="239" y="463.6" width="1" height="60.4" fill="url(#z3)"/><rect x="240" y="472.2" width="1" height="51.8" fill="url(#z3)"/><rect x="241" y="463.6" width="1" height="60.4" fill="url(#z3)"/><rect x="242" y="472.2" width="1" height="51.8" fill="url(#z3)"/><rect x="243" y="472.2" width="1" height="51.8" fill="url(#z3)"/><rect x="244" y="429.1" width="1" height="94.9" fill="url(#z3)"/><rect x="245" y="480.9" width="1" height="43.1" fill="url(#z3)"/><rect x="246" y="455.0" width="1" height="69.0" fill="url(#z3)"/><rect x="247" y="463.6" width="1" height="60.4" fill="url(#z4)"/><rect x="248" y="463.6" width="1" height="60.4" fill="url(#z4)"/><rect x="249" y="455.0" width="1" height="69.0" fill="url(#z4)"/><rect x="250" y="472.2" width="1" height="51.8" fill="url(#z4)"/><rect x="251" y="472.2" width="1" height="51.8" fill="url(#z4)"/><rect x="252" y="463.6" width="1" height="60.4" fill="url(#z4)"/><rect x="253" y="455.0" width="1" height="69.0" fill="url(#z4)"/><rect x="254" y="472.2" width="1" height="51.8" fill="url(#z4)"/><rect x="255" y="463.6" width="1" height="60.4" fill="url(#z4)"/><rect x="256" y="463.6" width="1" height="60.4" fill="url(#z4)"/><rect x="257" y="455.0" width="1" height="69.0" fill="url(#z5)"/><rect x="258" y="463.6" width="1" height="60.4" fill="url(#z5)"/><rect x="259" y="455.0" width="1" height="69.0" fill="url(#z5)"/><rect x="260" y="455.0" width="1" height="69.0" fill="url(#z5)"/><rect x="261" y="472.2" width="1" height="51.8" fill="url(#z5)"/><rect x="262" y="455.0" width="1" height="69.0" fill="url(#z5)"/><rect x="263" y="463.6" width="1" height="60.4" fill="url(#z5)"/><rect x="264" y="455.0" width="1" height="69.0" fill="url(#z5)"/><rect x="265" y="455.0" width="1" height="69.0" fill="url(#z5)"/><rect x="266" y="463.6" width="1" height="60.4" fill="url(#z5)"/><rect x="267" y="463.6" width="1" height="60.4" fill="url(#z6)"/><rect x="268" y="463.6" width="1" height="60.4" fill="url(#z6)"/><rect x="269" y="463.6" width="1" height="60.4" fill="url(#z6)"/><rect x="270" y="463.6" width="1" height="60.4" fill="url(#z6)"/><rect x="271" y="472.2" width="1" height="51.8" fill="url(#z6)"/><rect x="272" y="437.8" width="1" height="86.2" fill="url(#z6)"/><rect x="273" y="463.6" width="1" height="60.4" fill="url(#z6)"/><rect x="274" y="463.6" width="1" height="60.4" fill="url(#z6)"/><rect x="275" y="472.2" width="1" height="51.8" fill="url(#z6)"/><rect x="276" y="455.0" width="1" height="69.0" fill="url(#z6)"/><rect x="277" y="463.6" width="1" height="60.4" fill="url(#z6)"/><rect x="278" y="446.4" width="1" height="77.6" fill="url(#z7)"/><rect x="279" y="463.6" width="1" height="60.4" fill="url(#z7)"/><rect x="280" y="455.0" width="1" height="69.0" fill="url(#z7)"/><rect x="281" y="455.0" width="1" height="69.0" fill="url(#z7)"/><rect x="282" y="446.4" width="1" height="77.6" fill="url(#z7)"/><rect x="283" y="455.0" width="1" height="69.0" fill="url(#z7)"/><rect x="284" y="429.1" width="1" height="94.9" fill="url(#z7)"/><rect x="285" y="455.0" width="1" height="69.0" fill="url(#z7)"/><rect x="286" y="455.0" width="1" height="69.0" fill="url(#z7)"/><rect x="287" y="437.8" width="1" height="86.2" fill="url(#z7)"/><rect x="288" y="455.0" width="1" height="69.0" fill="url(#z8)"/><rect x="289" y="437.8" width="1" height="86.2" fill="url(#z8)"/><rect x="290" y="455.0" width="1" height="69.0" fill="url(#z8)"/><rect x="291" y="446.4" width="1" height="77.6" fill="url(#z8)"/><rect x="292" y="455.0" width="1" height="69.0" fill="url(#z8)"/><rect x="293" y="446.4" width="1" height="77.6" fill="url(#z8)"/><rect x="294" y="455.0" width="1" height="69.0" fill="url(#z8)"/><rect x="295" y="455.0" width="1" height="69.0" fill="url(#z8)"/><rect x="296" y="455.0" width="1" height="69.0" fill="url(#z8)"/><rect x="297" y="446.4" width="1" height="77.6" fill="url(#z8)"/><rect x="298" y="437.8" width="1" height="86.2" fill="url(#z9)"/><rect x="299" y="446.4" width="1" height="77.6" fill="url(#z9)"/><rect x="300" y="455.0" width="1" height="69.0" fill="url(#z9)"/><rect x="301" y="455.0" width="1" height="69.0" fill="url(#z9)"/><rect x="302" y="437.8" width="1" height="86.2" fill="url(#z9)"/><rect x="303" y="411.9" width="1" height="112.1" fill="url(#z9)"/><rect x="304" y="437.8" width="1" height="86.2" fill="url(#z9)"/><rect x="305" y="455.0" width="1" height="69.0" fill="url(#z9)"/><rect x="306" y="455.0" width="1" height="69.0" fill="url(#z9)"/><rect x="307" y="455.0" width="1" height="69.0" fill="url(#z9)"/><rect x="308" y="455.0" width="1" height="69.0" fill="url(#z9)"/><rect x="309" y="455.0" width="1" height="69.0" fill="url(#z10)"/><rect x="310" y="446.4" width="1" height="77.6" fill="url(#z10)"/><rect x="311" y="429.1" width="1" height="94.9" fill="url(#z10)"/><rect x="312" y="455.0" width="1" height="69.0" fill="url(#z10)"/><rect x="313" y="455.0" width="1" height="69.0" fill="url(#z10)"/><rect x="314" y="437.8" width="1" height="86.2" fill="url(#z10)"/><rect x="315" y="455.0" width="1" height="69.0" fill="url(#z10)"/><rect x="316" y="446.4" width="1" height="77.6" fill="url(#z10)"/><rect x="317" y="446.4" width="1" height="77.6" fill="url(#z10)"/><rect x="318" y="446.4" width="1" height="77.6" fill="url(#z10)"/><rect x="319" y="455.0" width="1" height="69.0" fill="url(#z11)"/><rect x="320" y="455.0" width="1" height="69.0" fill="url(#z11)"/><rect x="321" y="455.0" width="1" height="69.0" fill="url(#z11)"/><rect x="322" y="446.4" width="1" height="77.6" fill="url(#z11)"/><rect x="323" y="446.4" width="1" height="77.6" fill="url(#z11)"/><rect x="324" y="437.8" width="1" height="86.2" fill="url(#z11)"/><rect x="325" y="437.8" width="1" height="86.2" fill="url(#z11)"/><rect x="326" y="455.0" width="1" height="69.0" fill="url(#z11)"/><rect x="327" y="446.4" width="1" height="77.6" fill="url(#z11)"/><rect x="328" y="446.4" width="1" height="77.6" fill="url(#z11)"/><rect x="329" y="420.5" width="1" height="103.5" fill="url(#z12)"/><rect x="330" y="403.2" width="1" height="120.8" fill="url(#z12)"/><rect x="331" y="403.2" width="1" height="120.8" fill="url(#z12)"/><rect x="332" y="437.8" width="1" height="86.2" fill="url(#z12)"/><rect x="333" y="429.1" width="1" height="94.9" fill="url(#z12)"/><rect x="334" y="446.4" width="1" height="77.6" fill="url(#z12)"/><rect x="335" y="437.8" width="1" height="86.2" fill="url(#z12)"/><rect x="336" y="455.0" width="1" height="69.0" fill="url(#z12)"/><rect x="337" y="420.5" width="1" height="103.5" fill="url(#z12)"/><rect x="338" y="420.5" width="1" height="103.5" fill="url(#z12)"/><rect x="339" y="420.5" width="1" height="103.5" fill="url(#z12)"/><rect x="340" y="446.4" width="1" height="77.6" fill="url(#z13)"/><rect x="341" y="437.8" width="1" height="86.2" fill="url(#z13)"/><rect x="342" y="437.8" width="1" height="86.2" fill="url(#z13)"/><rect x="343" y="437.8" width="1" height="86.2" fill="url(#z13)"/><rect x="344" y="429.1" width="1" height="94.9" fill="url(#z13)"/><rect x="345" y="437.8" width="1" height="86.2" fill="url(#z13)"/><rect x="346" y="446.4" width="1" height="77.6" fill="url(#z13)"/><rect x="347" y="437.8" width="1" height="86.2" fill="url(#z13)"/><rect x="348" y="437.8" width="1" height="86.2" fill="url(#z13)"/><rect x="349" y="429.1" width="1" height="94.9" fill="url(#z13)"/><rect x="350" y="420.5" width="1" height="103.5" fill="url(#z14)"/><rect x="351" y="446.4" width="1" height="77.6" fill="url(#z14)"/><rect x="352" y="420.5" width="1" height="103.5" fill="url(#z14)"/><rect x="353" y="437.8" width="1" height="86.2" fill="url(#z14)"/><rect x="354" y="437.8" width="1" height="86.2" fill="url(#z14)"/><rect x="355" y="429.1" width="1" height="94.9" fill="url(#z14)"/><rect x="356" y="437.8" width="1" height="86.2" fill="url(#z14)"/><rect x="357" y="437.8" width="1" height="86.2" fill="url(#z14)"/><rect x="358" y="429.1" width="1" height="94.9" fill="url(#z14)"/><rect x="359" y="437.8" width="1" height="86.2" fill="url(#z14)"/><rect x="360" y="437.8" width="1" height="86.2" fill="url(#z15)"/><rect x="361" y="420.5" width="1" height="103.5" fill="url(#z15)"/><rect x="362" y="403.2" width="1" height="120.8" fill="url(#z15)"/><rect x="363" y="437.8" width="1" height="86.2" fill="url(#z15)"/><rect x="364" y="429.1" width="1" height="94.9" fill="url(#z15)"/><rect x="365" y="437.8" width="1" height="86.2" fill="url(#z15)"/><rect x="366" y="429.1" width="1" height="94.9" fill="url(#z15)"/><rect x="367" y="429.1" width="1" height="94.9" fill="url(#z15)"/><rect x="368" y="420.5" width="1" height="103.5" fill="url(#z15)"/><rect x="369" y="437.8" width="1" height="86.2" fill="url(#z15)"/><rect x="370" y="437.8" width="1" height="86.2" fill="url(#z15)"/><rect x="371" y="429.1" width="1" height="94.9" fill="url(#z16)"/><rect x="372" y="429.1" width="1" height="94.9" fill="url(#z16)"/><rect x="373" y="437.8" width="1" height="86.2" fill="url(#z16)"/><rect x="374" y="429.1" width="1" height="94.9" fill="url(#z16)"/><rect x="375" y="437.8" width="1" height="86.2" fill="url(#z16)"/><rect x="376" y="420.5" width="1" height="103.5" fill="url(#z16)"/><rect x="377" y="437.8" width="1" height="86.2" fill="url(#z16)"/><rect x="378" y="429.1" width="1" height="94.9" fill="url(#z16)"/><rect x="379" y="411.9" width="1" height="112.1" fill="url(#z16)"/><rect x="380" y="429.1" width="1" height="94.9" fill="url(#z16)"/><rect x="381" y="429.1" width="1" height="94.9" fill="url(#z17)"/><rect x="382" y="429.1" width="1" height="94.9" fill="url(#z17)"/><rect x="383" y="437.8" width="1" height="86.2" fill="url(#z17)"/><rect x="384" y="429.1" width="1" height="94.9" fill="url(#z17)"/><rect x="385" y="429.1" width="1" height="94.9" fill="url(#z17)"/><rect x="386" y="420.5" width="1" height="103.5" fill="url(#z17)"/><rect x="387" y="429.1" width="1" height="94.9" fill="url(#z17)"/><rect x="388" y="420.5" width="1" height="103.5" fill="url(#z17)"/><rect x="389" y="437.8" width="1" height="86.2" fill="url(#z17)"/><rect x="390" y="429.1" width="1" height="94.9" fill="url(#z17)"/><rect x="391" y="429.1" width="1" height="94.9" fill="url(#z18)"/><rect x="392" y="437.8" width="1" height="86.2" fill="url(#z18)"/><rect x="393" y="429.1" width="1" height="94.9" fill="url(#z18)"/><rect x="394" y="429.1" width="1" height="94.9" fill="url(#z18)"/><rect x="395" y="411.9" width="1" height="112.1" fill="url(#z18)"/><rect x="396" y="411.9" width="1" height="112.1" fill="url(#z18)"/><rect x="397" y="429.1" width="1" height="94.9" fill="url(#z18)"/><rect x="398" y="394.6" width="1" height="129.4" fill="url(#z18)"/><rect x="399" y="420.5" width="1" height="103.5" fill="url(#z18)"/><rect x="400" y="394.6" width="1" height="129.4" fill="url(#z18)"/><rect x="401" y="437.8" width="1" height="86.2" fill="url(#z18)"/><rect x="402" y="420.5" width="1" height="103.5" fill="url(#z19)"/><rect x="403" y="420.5" width="1" height="103.5" fill="url(#z19)"/><rect x="404" y="420.5" width="1" height="103.5" fill="url(#z19)"/><rect x="405" y="420.5" width="1" height="103.5" fill="url(#z19)"/><rect x="406" y="411.9" width="1" height="112.1" fill="url(#z19)"/><rect x="407" y="420.5" width="1" height="103.5" fill="url(#z19)"/><rect x="408" y="420.5" width="1" height="103.5" fill="url(#z19)"/><rect x="409" y="411.9" width="1" height="112.1" fill="url(#z19)"/><rect x="410" y="429.1" width="1" height="94.9" fill="url(#z19)"/><rect x="411" y="420.5" width="1" height="103.5" fill="url(#z19)"/><rect x="412" y="420.5" width="1" height="103.5" fill="url(#z20)"/><rect x="413" y="420.5" width="1" height="103.5" fill="url(#z20)"/><rect x="414" y="420.5" width="1" height="103.5" fill="url(#z20)"/><rect x="415" y="394.6" width="1" height="129.4" fill="url(#z20)"/><rect x="416" y="386.0" width="1" height="138.0" fill="url(#z20)"/><rect x="417" y="411.9" width="1" height="112.1" fill="url(#z20)"/><rect x="418" y="377.4" width="1" height="146.6" fill="url(#z20)"/><rect x="419" y="377.4" width="1" height="146.6" fill="url(#z20)"/><rect x="420" y="411.9" width="1" height="112.1" fill="url(#z20)"/><rect x="421" y="377.4" width="1" height="146.6" fill="url(#z20)"/><rect x="422" y="351.5" width="1" height="172.5" fill="url(#z21)"/><rect x="423" y="377.4" width="1" height="146.6" fill="url(#z21)"/><rect x="424" y="394.6" width="1" height="129.4" fill="url(#z21)"/><rect x="425" y="429.1" width="1" height="94.9" fill="url(#z21)"/><rect x="426" y="386.0" width="1" height="138.0" fill="url(#z21)"/><rect x="427" y="394.6" width="1" height="129.4" fill="url(#z21)"/><rect x="428" y="411.9" width="1" height="112.1" fill="url(#z21)"/><rect x="429" y="411.9" width="1" height="112.1" fill="url(#z21)"/><rect x="430" y="420.5" width="1" height="103.5" fill="url(#z21)"/><rect x="431" y="411.9" width="1" height="112.1" fill="url(#z21)"/><rect x="432" y="429.1" width="1" height="94.9" fill="url(#z21)"/><rect x="433" y="411.9" width="1" height="112.1" fill="url(#z22)"/><rect x="434" y="411.9" width="1" height="112.1" fill="url(#z22)"/><rect x="435" y="403.2" width="1" height="120.8" fill="url(#z22)"/><rect x="436" y="411.9" width="1" height="112.1" fill="url(#z22)"/><rect x="437" y="420.5" width="1" height="103.5" fill="url(#z22)"/><rect x="438" y="351.5" width="1" height="172.5" fill="url(#z220)"/><rect x="439" y="351.5" width="1" height="172.5" fill="url(#z220)"/><rect x="440" y="351.5" width="1" height="172.5" fill="url(#z220)"/><rect x="441" y="351.5" width="1" height="172.5" fill="url(#z220)"/><rect x="442" y="351.5" width="1" height="172.5" fill="url(#z220)"/><rect x="443" y="351.5" width="1" height="172.5" fill="url(#z23)"/><rect x="444" y="351.5" width="1" height="172.5" fill="url(#z23)"/><rect x="445" y="351.5" width="1" height="172.5" fill="url(#z23)"/><rect x="446" y="351.5" width="1" height="172.5" fill="url(#z23)"/><rect x="447" y="351.5" width="1" height="172.5" fill="url(#z23)"/><rect x="448" y="351.5" width="1" height="172.5" fill="url(#z23)"/><rect x="449" y="351.5" width="1" height="172.5" fill="url(#z23)"/><rect x="450" y="351.5" width="1" height="172.5" fill="url(#z23)"/><rect x="451" y="351.5" width="1" height="172.5" fill="url(#z23)"/><rect x="452" y="351.5" width="1" height="172.5" fill="url(#z23)"/><rect x="453" y="351.5" width="1" height="172.5" fill="url(#z24)"/><rect x="454" y="351.5" width="1" height="172.5" fill="url(#z24)"/><rect x="455" y="351.5" width="1" height="172.5" fill="url(#z24)"/><rect x="456" y="351.5" width="1" height="172.5" fill="url(#z24)"/><rect x="457" y="351.5" width="1" height="172.5" fill="url(#z24)"/><rect x="458" y="351.5" width="1" height="172.5" fill="url(#z24)"/><rect x="459" y="351.5" width="1" height="172.5" fill="url(#z24)"/><rect x="460" y="351.5" width="1" height="172.5" fill="url(#z24)"/><rect x="461" y="351.5" width="1" height="172.5" fill="url(#z24)"/><rect x="462" y="351.5" width="1" height="172.5" fill="url(#z24)"/><rect x="463" y="351.5" width="1" height="172.5" fill="url(#z25)"/><rect x="464" y="351.5" width="1" height="172.5" fill="url(#z25)"/><rect x="465" y="351.5" width="1" height="172.5" fill="url(#z25)"/><rect x="466" y="351.5" width="1" height="172.5" fill="url(#z25)"/><rect x="467" y="351.5" width="1" height="172.5" fill="url(#z25)"/><rect x="468" y="351.5" width="1" height="172.5" fill="url(#z25)"/><rect x="469" y="351.5" width="1" height="172.5" fill="url(#z25)"/><rect x="470" y="351.5" width="1" height="172.5" fill="url(#z25)"/><rect x="471" y="351.5" width="1" height="172.5" fill="url(#z25)"/><rect x="472" y="351.5" width="1" height="172.5" fill="url(#z25)"/><rect x="473" y="351.5" width="1" height="172.5" fill="url(#z25)"/><rect x="474" y="351.5" width="1" height="172.5" fill="url(#z26)"/><rect x="475" y="351.5" width="1" height="172.5" fill="url(#z26)"/><rect x="476" y="351.5" width="1" height="172.5" fill="url(#z26)"/><rect x="477" y="351.5" width="1" height="172.5" fill="url(#z26)"/><rect x="478" y="351.5" width="1" height="172.5" fill="url(#z26)"/><rect x="479" y="351.5" width="1" height="172.5" fill="url(#z26)"/><rect x="480" y="351.5" width="1" height="172.5" fill="url(#z26)"/><rect x="481" y="351.5" width="1" height="172.5" fill="url(#z26)"/><rect x="482" y="351.5" width="1" height="172.5" fill="url(#z26)"/><rect x="483" y="351.5" width="1" height="172.5" fill="url(#z26)"/><rect x="484" y="364.4" width="1" height="159.6" fill="url(#z27)"/><rect x="485" y="351.5" width="1" height="172.5" fill="url(#z27)"/><rect x="486" y="360.1" width="1" height="163.9" fill="url(#z27)"/><rect x="487" y="360.1" width="1" height="163.9" fill="url(#z27)"/><rect x="488" y="351.5" width="1" height="172.5" fill="url(#z27)"/><rect x="489" y="360.1" width="1" height="163.9" fill="url(#z27)"/><rect x="490" y="360.1" width="1" height="163.9" fill="url(#z27)"/><rect x="491" y="351.5" width="1" height="172.5" fill="url(#z27)"/><rect x="492" y="351.5" width="1" height="172.5" fill="url(#z27)"/><rect x="493" y="351.5" width="1" height="172.5" fill="url(#z27)"/><rect x="494" y="351.5" width="1" height="172.5" fill="url(#z28)"/><rect x="495" y="364.4" width="1" height="159.6" fill="url(#z28)"/><rect x="496" y="364.4" width="1" height="159.6" fill="url(#z28)"/><rect x="497" y="351.5" width="1" height="172.5" fill="url(#z28)"/><rect x="498" y="351.5" width="1" height="172.5" fill="url(#z28)"/><rect x="499" y="351.5" width="1" height="172.5" fill="url(#z28)"/><rect x="500" y="351.5" width="1" height="172.5" fill="url(#z28)"/><rect x="501" y="351.5" width="1" height="172.5" fill="url(#z28)"/><rect x="502" y="368.8" width="1" height="155.2" fill="url(#z28)"/><rect x="503" y="368.8" width="1" height="155.2" fill="url(#z28)"/><rect x="504" y="351.5" width="1" height="172.5" fill="url(#z28)"/><rect x="505" y="351.5" width="1" height="172.5" fill="url(#z29)"/><rect x="506" y="368.8" width="1" height="155.2" fill="url(#z29)"/><rect x="507" y="368.8" width="1" height="155.2" fill="url(#z29)"/><rect x="508" y="351.5" width="1" height="172.5" fill="url(#z29)"/><rect x="509" y="351.5" width="1" height="172.5" fill="url(#z29)"/><rect x="510" y="351.5" width="1" height="172.5" fill="url(#z29)"/><rect x="511" y="351.5" width="1" height="172.5" fill="url(#z29)"/><rect x="512" y="368.8" width="1" height="155.2" fill="url(#z29)"/><rect x="513" y="368.8" width="1" height="155.2" fill="url(#z29)"/><rect x="514" y="368.8" width="1" height="155.2" fill="url(#z29)"/><rect x="515" y="368.8" width="1" height="155.2" fill="url(#z30)"/><rect x="516" y="368.8" width="1" height="155.2" fill="url(#z30)"/><rect x="517" y="368.8" width="1" height="155.2" fill="url(#z30)"/><rect x="518" y="368.8" width="1" height="155.2" fill="url(#z30)"/><rect x="519" y="351.5" width="1" height="172.5" fill="url(#z30)"/><rect x="520" y="351.5" width="1" height="172.5" fill="url(#z30)"/><rect x="521" y="360.1" width="1" height="163.9" fill="url(#z30)"/><rect x="522" y="360.1" width="1" height="163.9" fill="url(#z30)"/><rect x="523" y="351.5" width="1" height="172.5" fill="url(#z30)"/><rect x="524" y="360.1" width="1" height="163.9" fill="url(#z30)"/><rect x="525" y="360.1" width="1" height="163.9" fill="url(#z31)"/><rect x="526" y="368.8" width="1" height="155.2" fill="url(#z31)"/><rect x="527" y="386.0" width="1" height="138.0" fill="url(#z31)"/><rect x="528" y="386.0" width="1" height="138.0" fill="url(#z31)"/><rect x="529" y="368.8" width="1" height="155.2" fill="url(#z31)"/><rect x="530" y="368.8" width="1" height="155.2" fill="url(#z31)"/><rect x="531" y="377.4" width="1" height="146.6" fill="url(#z31)"/><rect x="532" y="377.4" width="1" height="146.6" fill="url(#z31)"/><rect x="533" y="377.4" width="1" height="146.6" fill="url(#z31)"/><rect x="534" y="360.1" width="1" height="163.9" fill="url(#z31)"/><rect x="535" y="377.4" width="1" height="146.6" fill="url(#z31)"/><rect x="536" y="368.8" width="1" height="155.2" fill="url(#z32)"/><rect x="537" y="368.8" width="1" height="155.2" fill="url(#z32)"/><rect x="538" y="360.1" width="1" height="163.9" fill="url(#z32)"/><rect x="539" y="360.1" width="1" height="163.9" fill="url(#z32)"/><rect x="540" y="360.1" width="1" height="163.9" fill="url(#z32)"/><rect x="541" y="351.5" width="1" height="172.5" fill="url(#z32)"/><rect x="542" y="351.5" width="1" height="172.5" fill="url(#z32)"/><rect x="543" y="368.8" width="1" height="155.2" fill="url(#z32)"/><rect x="544" y="368.8" width="1" height="155.2" fill="url(#z32)"/><rect x="545" y="377.4" width="1" height="146.6" fill="url(#z32)"/><rect x="546" y="377.4" width="1" height="146.6" fill="url(#z33)"/><rect x="547" y="360.1" width="1" height="163.9" fill="url(#z33)"/><rect x="548" y="360.1" width="1" height="163.9" fill="url(#z33)"/><rect x="549" y="360.1" width="1" height="163.9" fill="url(#z33)"/><rect x="550" y="377.4" width="1" height="146.6" fill="url(#z33)"/><rect x="551" y="377.4" width="1" height="146.6" fill="url(#z33)"/><rect x="552" y="377.4" width="1" height="146.6" fill="url(#z33)"/><rect x="553" y="377.4" width="1" height="146.6" fill="url(#z33)"/><rect x="554" y="386.0" width="1" height="138.0" fill="url(#z33)"/><rect x="555" y="351.5" width="1" height="172.5" fill="url(#z33)"/><rect x="556" y="351.5" width="1" height="172.5" fill="url(#z34)"/><rect x="557" y="368.8" width="1" height="155.2" fill="url(#z34)"/><rect x="558" y="368.8" width="1" height="155.2" fill="url(#z34)"/><rect x="559" y="368.8" width="1" height="155.2" fill="url(#z34)"/><rect x="560" y="368.8" width="1" height="155.2" fill="url(#z34)"/><rect x="561" y="368.8" width="1" height="155.2" fill="url(#z34)"/><rect x="562" y="368.8" width="1" height="155.2" fill="url(#z34)"/><rect x="563" y="377.4" width="1" height="146.6" fill="url(#z34)"/><rect x="564" y="368.8" width="1" height="155.2" fill="url(#z34)"/><rect x="565" y="368.8" width="1" height="155.2" fill="url(#z34)"/><rect x="566" y="368.8" width="1" height="155.2" fill="url(#z34)"/><rect x="567" y="403.2" width="1" height="120.8" fill="url(#z35)"/><rect x="568" y="394.6" width="1" height="129.4" fill="url(#z35)"/><rect x="569" y="377.4" width="1" height="146.6" fill="url(#z35)"/><rect x="570" y="377.4" width="1" height="146.6" fill="url(#z35)"/><rect x="571" y="377.4" width="1" height="146.6" fill="url(#z35)"/><rect x="572" y="394.6" width="1" height="129.4" fill="url(#z35)"/><rect x="573" y="386.0" width="1" height="138.0" fill="url(#z35)"/><rect x="574" y="386.0" width="1" height="138.0" fill="url(#z35)"/><rect x="575" y="403.2" width="1" height="120.8" fill="url(#z35)"/><rect x="576" y="403.2" width="1" height="120.8" fill="url(#z35)"/><rect x="577" y="403.2" width="1" height="120.8" fill="url(#z36)"/><rect x="578" y="429.1" width="1" height="94.9" fill="url(#z36)"/><rect x="579" y="403.2" width="1" height="120.8" fill="url(#z36)"/><rect x="580" y="403.2" width="1" height="120.8" fill="url(#z36)"/><rect x="581" y="411.9" width="1" height="112.1" fill="url(#z36)"/><rect x="582" y="386.0" width="1" height="138.0" fill="url(#z36)"/><rect x="583" y="386.0" width="1" height="138.0" fill="url(#z36)"/><rect x="584" y="403.2" width="1" height="120.8" fill="url(#z36)"/><rect x="585" y="403.2" width="1" height="120.8" fill="url(#z36)"/><rect x="586" y="403.2" width="1" height="120.8" fill="url(#z36)"/><rect x="587" y="368.8" width="1" height="155.2" fill="url(#z37)"/><rect x="588" y="368.8" width="1" height="155.2" fill="url(#z37)"/><rect x="589" y="403.2" width="1" height="120.8" fill="url(#z37)"/><rect x="590" y="394.6" width="1" height="129.4" fill="url(#z37)"/><rect x="591" y="377.4" width="1" height="146.6" fill="url(#z37)"/><rect x="592" y="377.4" width="1" height="146.6" fill="url(#z37)"/><rect x="593" y="386.0" width="1" height="138.0" fill="url(#z37)"/><rect x="594" y="386.0" width="1" height="138.0" fill="url(#z37)"/><rect x="595" y="386.0" width="1" height="138.0" fill="url(#z37)"/><rect x="596" y="403.2" width="1" height="120.8" fill="url(#z37)"/><rect x="597" y="403.2" width="1" height="120.8" fill="url(#z37)"/><rect x="598" y="403.2" width="1" height="120.8" fill="url(#z38)"/><rect x="599" y="403.2" width="1" height="120.8" fill="url(#z38)"/><rect x="600" y="403.2" width="1" height="120.8" fill="url(#z38)"/><rect x="601" y="411.9" width="1" height="112.1" fill="url(#z38)"/><rect x="602" y="411.9" width="1" height="112.1" fill="url(#z38)"/><rect x="603" y="411.9" width="1" height="112.1" fill="url(#z38)"/><rect x="604" y="394.6" width="1" height="129.4" fill="url(#z38)"/><rect x="605" y="394.6" width="1" height="129.4" fill="url(#z38)"/><rect x="606" y="394.6" width="1" height="129.4" fill="url(#z38)"/><rect x="607" y="394.6" width="1" height="129.4" fill="url(#z38)"/><rect x="608" y="394.6" width="1" height="129.4" fill="url(#z39)"/><rect x="609" y="394.6" width="1" height="129.4" fill="url(#z39)"/><rect x="610" y="403.2" width="1" height="120.8" fill="url(#z39)"/><rect x="611" y="411.9" width="1" height="112.1" fill="url(#z39)"/><rect x="612" y="420.5" width="1" height="103.5" fill="url(#z39)"/><rect x="613" y="420.5" width="1" height="103.5" fill="url(#z39)"/><rect x="614" y="403.2" width="1" height="120.8" fill="url(#z39)"/><rect x="615" y="411.9" width="1" height="112.1" fill="url(#z39)"/><rect x="616" y="403.2" width="1" height="120.8" fill="url(#z39)"/><rect x="617" y="403.2" width="1" height="120.8" fill="url(#z39)"/><rect x="618" y="381.7" width="1" height="142.3" fill="url(#z40)"/><rect x="619" y="381.7" width="1" height="142.3" fill="url(#z40)"/><rect x="209" y="420.5" width="1" height="103.5" fill="#208000" fill-opacity="0.09"/><rect x="212" y="403.2" width="1" height="120.8" fill="#e8e040" fill-opacity="0.08"/><rect x="214" y="437.8" width="1" height="86.2" fill="#208000" fill-opacity="0.16"/><rect x="222" y="455.0" width="1" height="69.0" fill="#e8e040" fill-opacity="0.07"/><rect x="223" y="472.2" width="1" height="51.8" fill="#208000" fill-opacity="0.16"/><rect x="225" y="463.6" width="1" height="60.4" fill="#e8e040" fill-opacity="0.13"/><rect x="227" y="463.6" width="1" height="60.4" fill="#208000" fill-opacity="0.14"/><rect x="230" y="463.6" width="1" height="60.4" fill="#e8e040" fill-opacity="0.10"/><rect x="236" y="472.2" width="1" height="51.8" fill="#208000" fill-opacity="0.10"/><rect x="242" y="472.2" width="1" height="51.8" fill="#e8e040" fill-opacity="0.14"/><rect x="243" y="472.2" width="1" height="51.8" fill="#208000" fill-opacity="0.14"/><rect x="244" y="429.1" width="1" height="94.9" fill="#e8e040" fill-opacity="0.14"/><rect x="245" y="480.9" width="1" height="43.1" fill="#e8e040" fill-opacity="0.09"/><rect x="249" y="455.0" width="1" height="69.0" fill="#e8e040" fill-opacity="0.10"/><rect x="252" y="463.6" width="1" height="60.4" fill="#208000" fill-opacity="0.18"/><rect x="255" y="463.6" width="1" height="60.4" fill="#208000" fill-opacity="0.16"/><rect x="256" y="463.6" width="1" height="60.4" fill="#208000" fill-opacity="0.14"/><rect x="260" y="455.0" width="1" height="69.0" fill="#e8e040" fill-opacity="0.09"/><rect x="261" y="472.2" width="1" height="51.8" fill="#208000" fill-opacity="0.13"/><rect x="262" y="455.0" width="1" height="69.0" fill="#208000" fill-opacity="0.07"/><rect x="266" y="463.6" width="1" height="60.4" fill="#208000" fill-opacity="0.07"/><rect x="267" y="463.6" width="1" height="60.4" fill="#208000" fill-opacity="0.10"/><rect x="268" y="463.6" width="1" height="60.4" fill="#208000" fill-opacity="0.16"/><rect x="271" y="472.2" width="1" height="51.8" fill="#e8e040" fill-opacity="0.10"/><rect x="272" y="437.8" width="1" height="86.2" fill="#e8e040" fill-opacity="0.08"/><rect x="273" y="463.6" width="1" height="60.4" fill="#208000" fill-opacity="0.10"/><rect x="274" y="463.6" width="1" height="60.4" fill="#208000" fill-opacity="0.14"/><rect x="275" y="472.2" width="1" height="51.8" fill="#208000" fill-opacity="0.16"/><rect x="280" y="455.0" width="1" height="69.0" fill="#e8e040" fill-opacity="0.10"/><rect x="281" y="455.0" width="1" height="69.0" fill="#e8e040" fill-opacity="0.13"/><rect x="282" y="446.4" width="1" height="77.6" fill="#e8e040" fill-opacity="0.06"/><rect x="285" y="455.0" width="1" height="69.0" fill="#208000" fill-opacity="0.13"/><rect x="286" y="455.0" width="1" height="69.0" fill="#208000" fill-opacity="0.15"/><rect x="288" y="455.0" width="1" height="69.0" fill="#e8e040" fill-opacity="0.05"/><rect x="289" y="437.8" width="1" height="86.2" fill="#e8e040" fill-opacity="0.06"/><rect x="292" y="455.0" width="1" height="69.0" fill="#208000" fill-opacity="0.10"/><rect x="293" y="446.4" width="1" height="77.6" fill="#208000" fill-opacity="0.07"/><rect x="296" y="455.0" width="1" height="69.0" fill="#208000" fill-opacity="0.08"/><rect x="299" y="446.4" width="1" height="77.6" fill="#e8e040" fill-opacity="0.09"/><rect x="301" y="455.0" width="1" height="69.0" fill="#e8e040" fill-opacity="0.14"/><rect x="304" y="437.8" width="1" height="86.2" fill="#e8e040" fill-opacity="0.07"/><rect x="308" y="455.0" width="1" height="69.0" fill="#208000" fill-opacity="0.12"/><rect x="310" y="446.4" width="1" height="77.6" fill="#e8e040" fill-opacity="0.07"/><rect x="311" y="429.1" width="1" height="94.9" fill="#e8e040" fill-opacity="0.11"/><rect x="329" y="420.5" width="1" height="103.5" fill="#208000" fill-opacity="0.16"/><rect x="330" y="403.2" width="1" height="120.8" fill="#e8e040" fill-opacity="0.07"/><rect x="331" y="403.2" width="1" height="120.8" fill="#208000" fill-opacity="0.16"/><rect x="336" y="455.0" width="1" height="69.0" fill="#208000" fill-opacity="0.17"/><rect x="341" y="437.8" width="1" height="86.2" fill="#208000" fill-opacity="0.11"/><rect x="345" y="437.8" width="1" height="86.2" fill="#208000" fill-opacity="0.17"/><rect x="347" y="437.8" width="1" height="86.2" fill="#208000" fill-opacity="0.15"/><rect x="350" y="420.5" width="1" height="103.5" fill="#208000" fill-opacity="0.13"/><rect x="351" y="446.4" width="1" height="77.6" fill="#208000" fill-opacity="0.08"/><rect x="353" y="437.8" width="1" height="86.2" fill="#208000" fill-opacity="0.08"/><rect x="354" y="437.8" width="1" height="86.2" fill="#e8e040" fill-opacity="0.11"/><rect x="358" y="429.1" width="1" height="94.9" fill="#208000" fill-opacity="0.15"/><rect x="361" y="420.5" width="1" height="103.5" fill="#208000" fill-opacity="0.08"/><rect x="362" y="403.2" width="1" height="120.8" fill="#208000" fill-opacity="0.14"/><rect x="365" y="437.8" width="1" height="86.2" fill="#208000" fill-opacity="0.11"/><rect x="369" y="437.8" width="1" height="86.2" fill="#e8e040" fill-opacity="0.09"/><rect x="373" y="437.8" width="1" height="86.2" fill="#208000" fill-opacity="0.07"/><rect x="374" y="429.1" width="1" height="94.9" fill="#208000" fill-opacity="0.14"/><rect x="378" y="429.1" width="1" height="94.9" fill="#208000" fill-opacity="0.11"/><rect x="382" y="429.1" width="1" height="94.9" fill="#e8e040" fill-opacity="0.06"/><rect x="388" y="420.5" width="1" height="103.5" fill="#208000" fill-opacity="0.14"/><rect x="394" y="429.1" width="1" height="94.9" fill="#208000" fill-opacity="0.08"/><rect x="395" y="411.9" width="1" height="112.1" fill="#e8e040" fill-opacity="0.06"/><rect x="396" y="411.9" width="1" height="112.1" fill="#e8e040" fill-opacity="0.08"/><rect x="400" y="394.6" width="1" height="129.4" fill="#e8e040" fill-opacity="0.06"/><rect x="402" y="420.5" width="1" height="103.5" fill="#208000" fill-opacity="0.14"/><rect x="403" y="420.5" width="1" height="103.5" fill="#208000" fill-opacity="0.08"/><rect x="404" y="420.5" width="1" height="103.5" fill="#208000" fill-opacity="0.12"/><rect x="406" y="411.9" width="1" height="112.1" fill="#208000" fill-opacity="0.06"/><rect x="410" y="429.1" width="1" height="94.9" fill="#e8e040" fill-opacity="0.13"/><rect x="412" y="420.5" width="1" height="103.5" fill="#208000" fill-opacity="0.08"/><rect x="413" y="420.5" width="1" height="103.5" fill="#208000" fill-opacity="0.14"/><rect x="419" y="377.4" width="1" height="146.6" fill="#e8e040" fill-opacity="0.13"/><rect x="420" y="411.9" width="1" height="112.1" fill="#208000" fill-opacity="0.18"/><rect x="422" y="351.5" width="1" height="172.5" fill="#e8e040" fill-opacity="0.07"/><rect x="423" y="377.4" width="1" height="146.6" fill="#e8e040" fill-opacity="0.09"/><rect x="425" y="429.1" width="1" height="94.9" fill="#208000" fill-opacity="0.10"/><rect x="426" y="386.0" width="1" height="138.0" fill="#e8e040" fill-opacity="0.06"/><rect x="428" y="411.9" width="1" height="112.1" fill="#e8e040" fill-opacity="0.10"/><rect x="429" y="411.9" width="1" height="112.1" fill="#e8e040" fill-opacity="0.07"/><rect x="433" y="411.9" width="1" height="112.1" fill="#208000" fill-opacity="0.17"/><rect x="438" y="351.5" width="1" height="172.5" fill="#a03800" fill-opacity="0.27"/><rect x="440" y="351.5" width="1" height="172.5" fill="#a03800" fill-opacity="0.23"/><rect x="441" y="351.5" width="1" height="172.5" fill="#ffd800" fill-opacity="0.17"/><rect x="442" y="351.5" width="1" height="172.5" fill="#a03800" fill-opacity="0.31"/><rect x="443" y="351.5" width="1" height="172.5" fill="#a03800" fill-opacity="0.31"/><rect x="444" y="351.5" width="1" height="172.5" fill="#ffd800" fill-opacity="0.25"/><rect x="445" y="351.5" width="1" height="172.5" fill="#a03800" fill-opacity="0.25"/><rect x="447" y="351.5" width="1" height="172.5" fill="#a03800" fill-opacity="0.32"/><rect x="448" y="351.5" width="1" height="172.5" fill="#a03800" fill-opacity="0.28"/><rect x="450" y="351.5" width="1" height="172.5" fill="#ffd800" fill-opacity="0.13"/><rect x="452" y="351.5" width="1" height="172.5" fill="#a03800" fill-opacity="0.27"/><rect x="453" y="351.5" width="1" height="172.5" fill="#ffd800" fill-opacity="0.25"/><rect x="454" y="351.5" width="1" height="172.5" fill="#ffd800" fill-opacity="0.13"/><rect x="457" y="351.5" width="1" height="172.5" fill="#ffd800" fill-opacity="0.18"/><rect x="461" y="351.5" width="1" height="172.5" fill="#a03800" fill-opacity="0.29"/><rect x="467" y="351.5" width="1" height="172.5" fill="#a03800" fill-opacity="0.21"/><rect x="468" y="351.5" width="1" height="172.5" fill="#a03800" fill-opacity="0.24"/><rect x="469" y="351.5" width="1" height="172.5" fill="#a03800" fill-opacity="0.21"/><rect x="470" y="351.5" width="1" height="172.5" fill="#ffd800" fill-opacity="0.13"/><rect x="471" y="351.5" width="1" height="172.5" fill="#a03800" fill-opacity="0.32"/><rect x="472" y="351.5" width="1" height="172.5" fill="#a03800" fill-opacity="0.29"/><rect x="475" y="351.5" width="1" height="172.5" fill="#ffd800" fill-opacity="0.20"/><rect x="476" y="351.5" width="1" height="172.5" fill="#a03800" fill-opacity="0.20"/><rect x="480" y="351.5" width="1" height="172.5" fill="#ffd800" fill-opacity="0.16"/><rect x="482" y="351.5" width="1" height="172.5" fill="#ffd800" fill-opacity="0.28"/><rect x="485" y="351.5" width="1" height="172.5" fill="#a03800" fill-opacity="0.15"/><rect x="487" y="360.1" width="1" height="163.9" fill="#ffd800" fill-opacity="0.20"/><rect x="488" y="351.5" width="1" height="172.5" fill="#ffd800" fill-opacity="0.10"/><rect x="490" y="360.1" width="1" height="163.9" fill="#a03800" fill-opacity="0.26"/><rect x="491" y="351.5" width="1" height="172.5" fill="#ffd800" fill-opacity="0.18"/><rect x="492" y="351.5" width="1" height="172.5" fill="#ffd800" fill-opacity="0.26"/><rect x="495" y="364.4" width="1" height="159.6" fill="#a03800" fill-opacity="0.31"/><rect x="496" y="364.4" width="1" height="159.6" fill="#a03800" fill-opacity="0.31"/><rect x="498" y="351.5" width="1" height="172.5" fill="#ffd800" fill-opacity="0.12"/><rect x="510" y="351.5" width="1" height="172.5" fill="#a05000" fill-opacity="0.18"/><rect x="512" y="368.8" width="1" height="155.2" fill="#a05000" fill-opacity="0.09"/><rect x="514" y="368.8" width="1" height="155.2" fill="#a05000" fill-opacity="0.21"/><rect x="517" y="368.8" width="1" height="155.2" fill="#f0e000" fill-opacity="0.21"/><rect x="518" y="368.8" width="1" height="155.2" fill="#a05000" fill-opacity="0.11"/><rect x="522" y="360.1" width="1" height="163.9" fill="#a05000" fill-opacity="0.18"/><rect x="523" y="351.5" width="1" height="172.5" fill="#f0e000" fill-opacity="0.15"/><rect x="525" y="360.1" width="1" height="163.9" fill="#f0e000" fill-opacity="0.15"/><rect x="526" y="368.8" width="1" height="155.2" fill="#a05000" fill-opacity="0.20"/><rect x="529" y="368.8" width="1" height="155.2" fill="#f0e000" fill-opacity="0.23"/><rect x="531" y="377.4" width="1" height="146.6" fill="#a05000" fill-opacity="0.13"/><rect x="534" y="360.1" width="1" height="163.9" fill="#a05000" fill-opacity="0.18"/><rect x="538" y="360.1" width="1" height="163.9" fill="#f0e000" fill-opacity="0.24"/><rect x="541" y="351.5" width="1" height="172.5" fill="#f0e000" fill-opacity="0.22"/><rect x="543" y="368.8" width="1" height="155.2" fill="#f0e000" fill-opacity="0.16"/><rect x="545" y="377.4" width="1" height="146.6" fill="#f0e000" fill-opacity="0.24"/><rect x="548" y="360.1" width="1" height="163.9" fill="#a05000" fill-opacity="0.21"/><rect x="549" y="360.1" width="1" height="163.9" fill="#a05000" fill-opacity="0.18"/><rect x="550" y="377.4" width="1" height="146.6" fill="#f0e000" fill-opacity="0.21"/><rect x="552" y="377.4" width="1" height="146.6" fill="#f0e000" fill-opacity="0.14"/><rect x="555" y="351.5" width="1" height="172.5" fill="#a05000" fill-opacity="0.16"/><rect x="558" y="368.8" width="1" height="155.2" fill="#a05000" fill-opacity="0.11"/><rect x="559" y="368.8" width="1" height="155.2" fill="#a05000" fill-opacity="0.18"/><rect x="561" y="368.8" width="1" height="155.2" fill="#a05000" fill-opacity="0.22"/><rect x="562" y="368.8" width="1" height="155.2" fill="#a05000" fill-opacity="0.22"/><rect x="563" y="377.4" width="1" height="146.6" fill="#a05000" fill-opacity="0.17"/><rect x="567" y="403.2" width="1" height="120.8" fill="#a05000" fill-opacity="0.23"/><rect x="568" y="394.6" width="1" height="129.4" fill="#a05000" fill-opacity="0.11"/><rect x="570" y="377.4" width="1" height="146.6" fill="#a05000" fill-opacity="0.20"/><rect x="571" y="377.4" width="1" height="146.6" fill="#a05000" fill-opacity="0.21"/><rect x="575" y="403.2" width="1" height="120.8" fill="#a05000" fill-opacity="0.21"/><rect x="576" y="403.2" width="1" height="120.8" fill="#a05000" fill-opacity="0.09"/><rect x="579" y="403.2" width="1" height="120.8" fill="#f0e000" fill-opacity="0.17"/><rect x="580" y="403.2" width="1" height="120.8" fill="#a05000" fill-opacity="0.12"/><rect x="588" y="368.8" width="1" height="155.2" fill="#a05000" fill-opacity="0.15"/><rect x="591" y="377.4" width="1" height="146.6" fill="#f0e000" fill-opacity="0.21"/><rect x="593" y="386.0" width="1" height="138.0" fill="#f0e000" fill-opacity="0.18"/><rect x="596" y="403.2" width="1" height="120.8" fill="#f0e000" fill-opacity="0.13"/><rect x="598" y="403.2" width="1" height="120.8" fill="#a05000" fill-opacity="0.15"/><rect x="600" y="403.2" width="1" height="120.8" fill="#f0e000" fill-opacity="0.19"/><rect x="606" y="394.6" width="1" height="129.4" fill="#a05000" fill-opacity="0.10"/><rect x="607" y="394.6" width="1" height="129.4" fill="#a05000" fill-opacity="0.18"/><rect x="611" y="411.9" width="1" height="112.1" fill="#a05000" fill-opacity="0.14"/>
 <rect x="206" y="351" width="2" height="121" fill="#c81020"/><rect x="206" y="472" width="1" height="52" fill="#7c6800"/>
 <rect x="620" y="351" width="51" height="173" fill="#c80000"/></g>
 <path d="M205.500 524V350.500H721.500V524M671 523.500H722" fill="none" stroke="#000" shape-rendering="crispEdges"/>
 <!-- legends -->
 <rect x="207" y="136" width="6" height="8" fill="#088808"/><rect x="239" y="136" width="6" height="8" fill="#10e8f8"/><rect x="309" y="136" width="6" height="8" fill="#808080"/>
 <rect x="207" y="340" width="6" height="8" fill="#088808"/><rect x="235" y="340" width="6" height="8" fill="#9090f0"/><rect x="270" y="336" width="6" height="3" fill="#000"/>
 <!-- ticks -->
 <g stroke="#000" shape-rendering="crispEdges">
 <path d="M201 147.500h4M201 176.500h4M201 205.500h4M201 233.500h4M201 262.500h4M201 291.500h4"/>
 <path d="M721 148.500h4M721 169.500h4M721 191.500h4M721 212.500h4M721 233.500h4M721 255.500h4M721 276.500h4M721 298.500h4"/>
 <path d="M201 351.500h4M201 394.500h4M201 437.500h4M201 480.500h4"/>
 </g>
</svg>
<!-- legend text -->
<!-- y axis chart1 -->
<!-- y axis chart2 -->
<!-- x axis -->
<!-- stats -->
<div style="left:451px;top:549px;width:13px;height:13px;border:1px solid #8e8f8f;background:linear-gradient(135deg,#d4d8e2,#f4f4fa);box-shadow:inset 0 0 0 1px #f4f4f8"></div>
<svg width="767" height="671" viewBox="0 0 767 671"><path d="M454.200 555.300l2.300 3.400 4.300-7" stroke="#4656a4" stroke-width="1.700" fill="none"/></svg>
<div class="combo" style="left:661px;top:547px;width:88px;height:25px"></div>
<div class="arrow" style="left:736px;top:558px"></div>
<div class="combo" style="left:662px;top:595px;width:86px;height:28px"></div>

<!-- status bar -->
<div style="left:8px;top:643px;width:751px;height:20px;background:#f1efef;border-top:1px solid #6e6e78"></div>
<div style="left:147px;top:646px;width:1px;height:17px;background:#c8c8c8"></div>
<div style="left:152px;top:648px;width:303px;height:12px;border:1px solid #b0b0b0;border-radius:2px;background:linear-gradient(#d2f6d2 0,#8fe89a 18%,#2fd048 40%,#0cc22a 70%,#12b82c 88%,#0f9a26 100%)"></div>
<div style="left:514px;top:646px;width:1px;height:17px;background:#d0d0d0"></div>
<div style="left:637px;top:646px;width:1px;height:17px;background:#d0d0d0"></div>
<svg width="767" height="671" viewBox="0 0 767 671"><g fill="#b8b8b8"><rect x="755" y="653" width="2" height="2"/><rect x="755" y="656" width="2" height="2"/><rect x="755" y="659" width="2" height="2"/><rect x="752" y="656" width="2" height="2"/><rect x="752" y="659" width="2" height="2"/><rect x="749" y="659" width="2" height="2"/></g></svg>
<div style="left:101.00px;top:73.88px;font-size:11.60px;line-height:11.60px;transform:scaleX(1.1391);transform-origin:0 0;">(R:)</div>
<div style="left:136.00px;top:73.88px;font-size:11.60px;line-height:11.60px;transform:scaleX(0.9383);transform-origin:0 0;">ATAPI BD</div>
<div style="left:193.60px;top:73.88px;font-size:11.60px;line-height:11.60px;transform:scaleX(0.8400);transform-origin:0 0;">O</div>
<div style="left:209.00px;top:73.88px;font-size:11.60px;line-height:11.60px;">DH4O1S 2P53</div>
<div style="left:478.80px;top:72.98px;font-size:11.60px;line-height:11.60px;transform:scaleX(1.0780);transform-origin:0 0;">4.0 X</div>
<div style="left:17.50px;top:115.51px;font-size:11.80px;line-height:11.80px;transform:scaleX(0.9439);transform-origin:0 0;font-weight:bold;">Disc</div>
<div style="left:17.50px;top:142.85px;font-size:11.40px;line-height:11.40px;">Type</div>
<div style="left:120.50px;top:142.85px;font-size:11.40px;line-height:11.40px;transform:scaleX(0.9868);transform-origin:0 0;color:#1c1c9e;">BD-R DL</div>
<div style="left:17.50px;top:164.55px;font-size:11.40px;line-height:11.40px;transform:scaleX(0.9561);transform-origin:0 0;">MID</div>
<div style="left:89.20px;top:164.55px;font-size:11.40px;line-height:11.40px;transform:scaleX(1.0945);transform-origin:0 0;color:#1c1c9e;">MEIT02 (001)</div>
<div style="left:17.50px;top:185.85px;font-size:11.40px;line-height:11.40px;transform:scaleX(1.0234);transform-origin:0 0;">Length</div>
<div style="left:115.00px;top:185.85px;font-size:11.40px;line-height:11.40px;transform:scaleX(1.0674);transform-origin:0 0;color:#1c1c9e;">45.11 GB</div>
<div style="left:17.50px;top:206.55px;font-size:11.40px;line-height:11.40px;transform:scaleX(1.0119);transform-origin:0 0;">Contents</div>
<div style="left:143.00px;top:206.55px;font-size:11.40px;line-height:11.40px;transform:scaleX(1.0121);transform-origin:0 0;color:#1c1c9e;">data</div>
<div style="left:38.00px;top:235.51px;font-size:11.80px;line-height:11.80px;transform:scaleX(0.9794);transform-origin:0 0;">Transfer rate</div>
<div style="left:38.00px;top:263.51px;font-size:11.80px;line-height:11.80px;">Create test disc</div>
<div style="left:38.00px;top:291.51px;font-size:11.80px;line-height:11.80px;transform:scaleX(1.0519);transform-origin:0 0;">Verify test disc</div>
<div style="left:38.00px;top:319.21px;font-size:11.80px;line-height:11.80px;transform:scaleX(0.9829);transform-origin:0 0;">Drive info</div>
<div style="left:38.00px;top:347.21px;font-size:11.80px;line-height:11.80px;">Disc info</div>
<div style="left:38.00px;top:375.01px;font-size:11.80px;line-height:11.80px;color:#fff;">Disc quality</div>
<div style="left:38.00px;top:403.01px;font-size:11.80px;line-height:11.80px;transform:scaleX(0.9685);transform-origin:0 0;">CD Bler</div>
<div style="left:38.00px;top:431.01px;font-size:11.80px;line-height:11.80px;transform:scaleX(1.0310);transform-origin:0 0;">FE / TE</div>
<div style="left:38.00px;top:458.81px;font-size:11.80px;line-height:11.80px;">Extra tests</div>
<div style="left:207.20px;top:112.22px;font-size:13.80px;line-height:13.80px;transform:scaleX(1.1331);transform-origin:0 0;font-weight:bold;color:#fff;">Disc quality</div>
<div style="left:40.30px;top:623.38px;font-size:11.60px;line-height:11.60px;transform:scaleX(1.0886);transform-origin:0 0;">Status window &gt;&gt;</div>
<div style="left:216.70px;top:135.31px;font-size:10.50px;line-height:10.50px;transform:scaleX(0.8905);transform-origin:0 0;">LDC</div>
<div style="left:248.20px;top:135.31px;font-size:10.50px;line-height:10.50px;">Read speed</div>
<div style="left:318.00px;top:135.31px;font-size:10.50px;line-height:10.50px;transform:scaleX(1.0258);transform-origin:0 0;">Write speed</div>
<div style="left:216.20px;top:339.31px;font-size:10.50px;line-height:10.50px;transform:scaleX(0.9228);transform-origin:0 0;">BIS</div>
<div style="left:244.30px;top:339.31px;font-size:10.50px;line-height:10.50px;transform:scaleX(0.9810);transform-origin:0 0;">Jitter</div>
<div style="left:184.50px;top:142.09px;font-size:11.00px;line-height:11.00px;transform:scaleX(0.8710);transform-origin:0 0;">300</div>
<div style="left:184.50px;top:170.99px;font-size:11.00px;line-height:11.00px;transform:scaleX(0.8710);transform-origin:0 0;">250</div>
<div style="left:184.50px;top:199.79px;font-size:11.00px;line-height:11.00px;transform:scaleX(0.8710);transform-origin:0 0;">200</div>
<div style="left:184.50px;top:228.19px;font-size:11.00px;line-height:11.00px;transform:scaleX(0.8710);transform-origin:0 0;">150</div>
<div style="left:184.50px;top:256.79px;font-size:11.00px;line-height:11.00px;transform:scaleX(0.8710);transform-origin:0 0;">100</div>
<div style="left:191.50px;top:285.79px;font-size:11.00px;line-height:11.00px;transform:scaleX(0.7371);transform-origin:0 0;">50</div>
<div style="left:725.30px;top:142.69px;font-size:11.00px;line-height:11.00px;transform:scaleX(0.9515);transform-origin:0 0;">8 X</div>
<div style="left:725.30px;top:164.14px;font-size:11.00px;line-height:11.00px;transform:scaleX(0.9515);transform-origin:0 0;">7 X</div>
<div style="left:725.30px;top:185.59px;font-size:11.00px;line-height:11.00px;transform:scaleX(0.9515);transform-origin:0 0;">6 X</div>
<div style="left:725.30px;top:207.04px;font-size:11.00px;line-height:11.00px;transform:scaleX(0.9515);transform-origin:0 0;">5 X</div>
<div style="left:725.30px;top:228.49px;font-size:11.00px;line-height:11.00px;transform:scaleX(0.9515);transform-origin:0 0;">4 X</div>
<div style="left:725.30px;top:249.94px;font-size:11.00px;line-height:11.00px;transform:scaleX(0.9515);transform-origin:0 0;">3 X</div>
<div style="left:725.30px;top:271.39px;font-size:11.00px;line-height:11.00px;transform:scaleX(0.9515);transform-origin:0 0;">2 X</div>
<div style="left:725.30px;top:292.84px;font-size:11.00px;line-height:11.00px;transform:scaleX(0.9515);transform-origin:0 0;">1 X</div>
<div style="left:189.50px;top:346.59px;font-size:11.00px;line-height:11.00px;transform:scaleX(0.9009);transform-origin:0 0;">20</div>
<div style="left:189.50px;top:389.69px;font-size:11.00px;line-height:11.00px;transform:scaleX(0.9009);transform-origin:0 0;">15</div>
<div style="left:189.50px;top:432.69px;font-size:11.00px;line-height:11.00px;transform:scaleX(0.9009);transform-origin:0 0;">10</div>
<div style="left:194.80px;top:475.69px;font-size:11.00px;line-height:11.00px;transform:scaleX(0.9337);transform-origin:0 0;">5</div>
<div style="left:725.20px;top:345.89px;font-size:11.00px;line-height:11.00px;transform:scaleX(0.9727);transform-origin:0 0;">10%</div>
<div style="left:725.20px;top:379.99px;font-size:11.00px;line-height:11.00px;">8%</div>
<div style="left:725.20px;top:414.29px;font-size:11.00px;line-height:11.00px;">6%</div>
<div style="left:725.20px;top:448.69px;font-size:11.00px;line-height:11.00px;">4%</div>
<div style="left:725.20px;top:482.99px;font-size:11.00px;line-height:11.00px;">2%</div>
<div style="left:198.70px;top:321.19px;font-size:11.00px;line-height:11.00px;transform:scaleX(0.9026);transform-origin:0 0;">0.0</div>
<div style="left:249.30px;top:321.19px;font-size:11.00px;line-height:11.00px;transform:scaleX(0.9483);transform-origin:0 0;">5.0</div>
<div style="left:298.80px;top:321.19px;font-size:11.00px;line-height:11.00px;transform:scaleX(0.9348);transform-origin:0 0;">10.0</div>
<div style="left:350.00px;top:321.19px;font-size:11.00px;line-height:11.00px;transform:scaleX(0.9114);transform-origin:0 0;">15.0</div>
<div style="left:401.30px;top:321.19px;font-size:11.00px;line-height:11.00px;transform:scaleX(0.9348);transform-origin:0 0;">20.0</div>
<div style="left:452.00px;top:321.19px;font-size:11.00px;line-height:11.00px;transform:scaleX(0.9582);transform-origin:0 0;">25.0</div>
<div style="left:504.30px;top:321.19px;font-size:11.00px;line-height:11.00px;transform:scaleX(0.9441);transform-origin:0 0;">30.0</div>
<div style="left:555.90px;top:321.19px;font-size:11.00px;line-height:11.00px;transform:scaleX(0.9395);transform-origin:0 0;">35.0</div>
<div style="left:607.20px;top:321.19px;font-size:11.00px;line-height:11.00px;transform:scaleX(0.9722);transform-origin:0 0;">40.0</div>
<div style="left:658.50px;top:321.19px;font-size:11.00px;line-height:11.00px;transform:scaleX(0.9675);transform-origin:0 0;">45.0</div>
<div style="left:700.50px;top:321.19px;font-size:11.00px;line-height:11.00px;transform:scaleX(0.9834);transform-origin:0 0;">50.0 GB</div>
<div style="left:198.70px;top:525.09px;font-size:11.00px;line-height:11.00px;transform:scaleX(0.9026);transform-origin:0 0;">0.0</div>
<div style="left:249.30px;top:525.09px;font-size:11.00px;line-height:11.00px;transform:scaleX(0.9483);transform-origin:0 0;">5.0</div>
<div style="left:298.80px;top:525.09px;font-size:11.00px;line-height:11.00px;transform:scaleX(0.9348);transform-origin:0 0;">10.0</div>
<div style="left:350.00px;top:525.09px;font-size:11.00px;line-height:11.00px;transform:scaleX(0.9114);transform-origin:0 0;">15.0</div>
<div style="left:401.30px;top:525.09px;font-size:11.00px;line-height:11.00px;transform:scaleX(0.9348);transform-origin:0 0;">20.0</div>
<div style="left:452.00px;top:525.09px;font-size:11.00px;line-height:11.00px;transform:scaleX(0.9582);transform-origin:0 0;">25.0</div>
<div style="left:504.30px;top:525.09px;font-size:11.00px;line-height:11.00px;transform:scaleX(0.9441);transform-origin:0 0;">30.0</div>
<div style="left:555.90px;top:525.09px;font-size:11.00px;line-height:11.00px;transform:scaleX(0.9395);transform-origin:0 0;">35.0</div>
<div style="left:607.20px;top:525.09px;font-size:11.00px;line-height:11.00px;transform:scaleX(0.9722);transform-origin:0 0;">40.0</div>
<div style="left:658.50px;top:525.09px;font-size:11.00px;line-height:11.00px;transform:scaleX(0.9675);transform-origin:0 0;">45.0</div>
<div style="left:700.50px;top:525.09px;font-size:11.00px;line-height:11.00px;transform:scaleX(0.9834);transform-origin:0 0;">50.0 GB</div>
<div style="left:287.50px;top:547.85px;font-size:11.40px;line-height:11.40px;transform:scaleX(0.8991);transform-origin:0 0;">LDC</div>
<div style="left:353.00px;top:547.85px;font-size:11.40px;line-height:11.40px;transform:scaleX(0.9644);transform-origin:0 0;">BIS</div>
<div style="left:179.20px;top:568.35px;font-size:11.40px;line-height:11.40px;transform:scaleX(0.9775);transform-origin:0 0;">Avg</div>
<div style="left:179.20px;top:589.65px;font-size:11.40px;line-height:11.40px;transform:scaleX(0.9654);transform-origin:0 0;">Max</div>
<div style="left:179.00px;top:611.35px;font-size:11.40px;line-height:11.40px;">Total</div>
<div style="left:262.00px;top:568.35px;font-size:11.40px;line-height:11.40px;transform:scaleX(1.0750);transform-origin:0 0;color:#1c1c9e;">1283.71</div>
<div style="left:279.50px;top:589.65px;font-size:11.40px;line-height:11.40px;transform:scaleX(1.0645);transform-origin:0 0;color:#1c1c9e;">9728</div>
<div style="left:245.50px;top:611.35px;font-size:11.40px;line-height:11.40px;transform:scaleX(1.0866);transform-origin:0 0;color:#1c1c9e;">948793647</div>
<div style="left:338.00px;top:568.35px;font-size:11.40px;line-height:11.40px;transform:scaleX(1.1031);transform-origin:0 0;color:#1c1c9e;">92.14</div>
<div style="left:349.50px;top:589.65px;font-size:11.40px;line-height:11.40px;transform:scaleX(1.0505);transform-origin:0 0;color:#1c1c9e;">768</div>
<div style="left:315.00px;top:611.35px;font-size:11.40px;line-height:11.40px;transform:scaleX(1.0743);transform-origin:0 0;color:#1c1c9e;">58102271</div>
<div style="left:478.00px;top:549.65px;font-size:11.40px;line-height:11.40px;transform:scaleX(1.0615);transform-origin:0 0;">Jitter</div>
<div style="left:528.10px;top:553.75px;font-size:11.40px;line-height:11.40px;transform:scaleX(0.9774);transform-origin:0 0;">Speed</div>
<div style="left:528.10px;top:589.65px;font-size:11.40px;line-height:11.40px;transform:scaleX(1.0398);transform-origin:0 0;">Position</div>
<div style="left:528.10px;top:611.35px;font-size:11.40px;line-height:11.40px;transform:scaleX(1.0125);transform-origin:0 0;">Samples</div>
<div style="left:596.50px;top:553.75px;font-size:11.40px;line-height:11.40px;transform:scaleX(1.0866);transform-origin:0 0;color:#1c1c9e;">1.82 X</div>
<div style="left:596.50px;top:589.65px;font-size:11.40px;line-height:11.40px;transform:scaleX(1.0760);transform-origin:0 0;color:#1c1c9e;">46193</div>
<div style="left:596.50px;top:611.35px;font-size:11.40px;line-height:11.40px;transform:scaleX(1.0731);transform-origin:0 0;color:#1c1c9e;">742491</div>
<div style="left:664.80px;top:553.08px;font-size:11.60px;line-height:11.60px;transform:scaleX(1.0633);transform-origin:0 0;">4.0 X</div>
<div style="left:692.00px;top:602.18px;font-size:11.60px;line-height:11.60px;transform:scaleX(1.0786);transform-origin:0 0;">Start</div>
<div style="left:10.50px;top:648.14px;font-size:12.00px;line-height:12.00px;transform:scaleX(0.9653);transform-origin:0 0;">Test completed</div>
<div style="left:462.00px;top:647.84px;font-size:12.00px;line-height:12.00px;transform:scaleX(0.7620);transform-origin:0 0;">100.0%</div>
<div style="left:610.00px;top:648.14px;font-size:12.00px;line-height:12.00px;transform:scaleX(0.8550);transform-origin:0 0;">59:42</div>

</body></html>
